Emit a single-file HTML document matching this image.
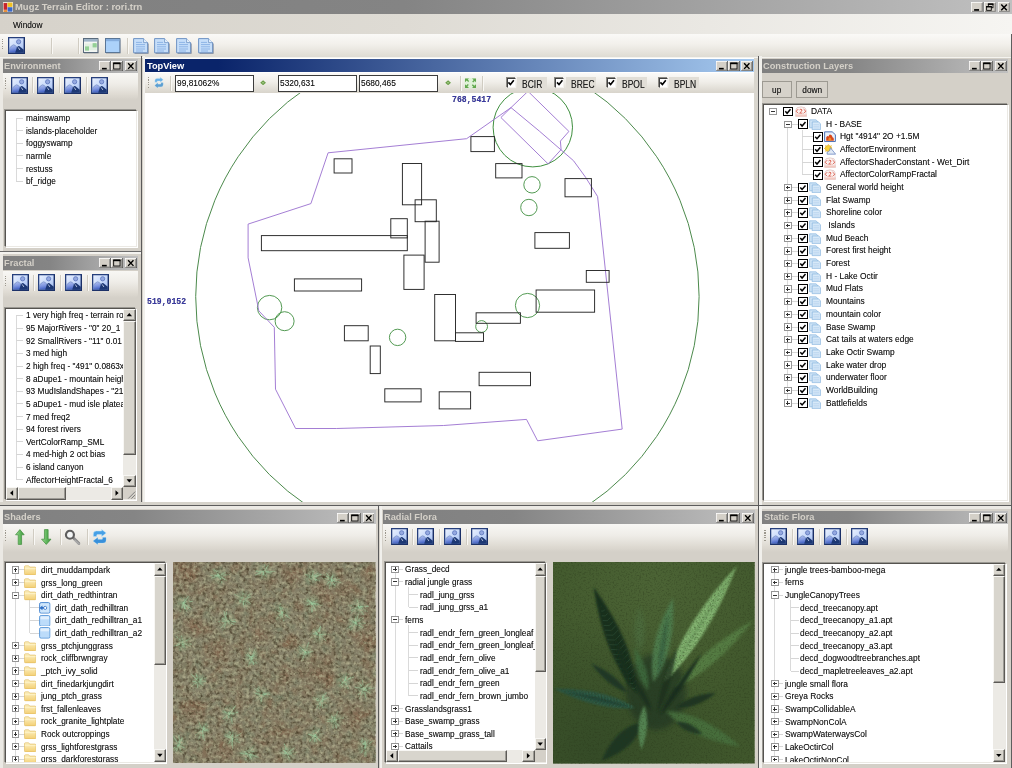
<!DOCTYPE html>
<html><head><meta charset="utf-8"><title>Mugz Terrain Editor : rori.trn</title>
<style>
html,body{margin:0;padding:0}
body{width:1012px;height:768px;overflow:hidden;background:#d4d0c8;position:relative;font-family:"Liberation Sans",sans-serif;}
#r{position:absolute;left:0;top:0;width:1012px;height:768px;overflow:hidden}
#r div,#r svg,#r span{position:absolute}
.t{font-size:9.5px;line-height:12px;height:12px;white-space:nowrap;color:#161616;transform:scaleX(0.872);transform-origin:0 50%;text-shadow:0 0 0.5px rgba(0,0,0,0.45)}
.w{transform:scaleX(0.884)}
.b{font-weight:bold;font-size:9.6px;transform:scaleX(0.965);text-shadow:none}
.mono{font-family:"Liberation Mono","DejaVu Sans Mono",monospace;font-weight:bold;font-size:8.4px;color:#3838a2;transform:scaleX(0.97)}
</style></head>
<body><div id="r">

<svg width="0" height="0" style="left:0;top:0">
<defs>
<linearGradient id="picg" x1="0" y1="0" x2="1" y2="1"><stop offset="0" stop-color="#eaf1fe"/><stop offset="0.55" stop-color="#c6d8fa"/><stop offset="1" stop-color="#9ab6ee"/></linearGradient>
<linearGradient id="mtn" x1="0" y1="0" x2="0.25" y2="1"><stop offset="0" stop-color="#b6c4f0"/><stop offset="0.55" stop-color="#7e96e0"/><stop offset="1" stop-color="#3f5ec0"/></linearGradient>
<symbol id="pic" viewBox="0 0 16 16">
 <rect x="-0.700" y="-0.700" width="17.400" height="17.400" rx="1" fill="#f6f8fd" opacity="0.850"/>
 <rect x="0.600" y="0.600" width="14.800" height="14.800" fill="url(#picg)" stroke="#263f7c" stroke-width="1.200"/>
 <circle cx="10" cy="4.500" r="2" fill="#95a9e0" stroke="#5e78be" stroke-width="0.800"/>
 <path d="M1.200 14.800V10.800Q3 8 5.200 7.300Q7 7.500 8.400 9.600L12.400 14.800Z" fill="url(#mtn)" stroke="#5f7cb6" stroke-width="0.500"/>
 <path d="M6.800 14.800L8.300 9.900Q9.700 8.100 10.800 8.700L14.800 12V14.800Z" fill="#1d3874"/>
 <path d="M9.600 9.800L11.200 12.200" stroke="#e6eeff" stroke-width="0.900" opacity="0.800"/>
 <path d="M0.600 15.400H15.400V0.600" fill="none" stroke="#15295c" stroke-width="1.200" opacity="0.700"/>
</symbol>
<symbol id="appico" viewBox="0 0 10 10">
 <rect x="0" y="0" width="10" height="10" fill="#e8e4dc"/>
 <rect x="0.6" y="1" width="3.6" height="6.4" fill="#c8242c"/>
 <rect x="4.6" y="0.6" width="4.8" height="4" fill="#f0c020"/>
 <rect x="4.6" y="5" width="4.8" height="4.2" fill="#3a68c8"/>
 <rect x="0.6" y="7.8" width="3.6" height="1.6" fill="#e88020"/>
</symbol>
<symbol id="b_base" viewBox="0 0 16 14">
 <rect x="0" y="0" width="16" height="14" fill="#d4d0c8"/>
 <path d="M0 14V0H16" fill="none" stroke="#fff" stroke-width="1.8"/>
 <path d="M16 0V14H0" fill="none" stroke="#404040" stroke-width="1.8"/>
 <path d="M14.4 1.4V12.4H1.4" fill="none" stroke="#808080" stroke-width="1.2"/>
</symbol>
<symbol id="b_min" viewBox="0 0 16 14"><use href="#b_base"/><rect x="4" y="9.4" width="6.4" height="2.2" fill="#000"/></symbol>
<symbol id="b_max" viewBox="0 0 16 14"><use href="#b_base"/><rect x="3.6" y="2.8" width="8.6" height="8.2" fill="none" stroke="#000" stroke-width="1.2"/><rect x="3" y="2.2" width="9.8" height="2.2" fill="#000"/></symbol>
<symbol id="b_restore" viewBox="0 0 16 14"><use href="#b_base"/><rect x="5.6" y="2.6" width="6" height="5" fill="none" stroke="#000" stroke-width="1.1"/><rect x="5" y="2" width="7.2" height="1.8" fill="#000"/><rect x="3.4" y="6" width="6" height="5" fill="#d4d0c8" stroke="#000" stroke-width="1.1"/><rect x="2.8" y="5.4" width="7.2" height="1.8" fill="#000"/></symbol>
<symbol id="b_close" viewBox="0 0 16 14"><use href="#b_base"/><path d="M4.2 3.2L11.4 10.8M11.4 3.2L4.2 10.8" stroke="#000" stroke-width="1.9"/></symbol>
<symbol id="win_green" viewBox="0 0 16 16">
 <rect x="1" y="1.4" width="14.6" height="14.2" fill="#6a6f78" opacity="0.55"/>
 <rect x="0.5" y="0.5" width="14.4" height="14" fill="#f3f6f3" stroke="#596a7c" stroke-width="1"/>
 <rect x="1" y="1" width="13.4" height="2.6" fill="#9eb4c8"/>
 <rect x="2" y="8.4" width="4" height="4" fill="#58b85c"/><rect x="9.6" y="5.4" width="4" height="4" fill="#58b85c"/>
 <rect x="2" y="5.6" width="11.6" height="6.6" fill="#cfe8cf" opacity="0.5"/>
</symbol>
<symbol id="win_blue" viewBox="0 0 16 16">
 <rect x="1" y="1.4" width="14.6" height="14.2" fill="#6a6f78" opacity="0.55"/>
 <rect x="0.5" y="0.5" width="14.4" height="14" fill="#acd2fa" stroke="#5a7696" stroke-width="1"/>
 <rect x="1" y="1" width="13.4" height="2.2" fill="#86aede"/>
</symbol>
<symbol id="doc" viewBox="0 0 16 16">
 <path d="M1.600 1.800H11.400L15.600 5.800V15.800H1.600Z" fill="#56627a" opacity="0.750"/>
 <path d="M0.600 0.600H10.600L14.600 4.600V14.800H0.600Z" fill="#c6def9" stroke="#6f93c4" stroke-width="1"/>
 <path d="M10.600 0.600V4.600H14.600" fill="#e8f2fd" stroke="#6f93c4" stroke-width="0.800"/>
 <path d="M3 4.400H9M3 6.600H12M3 8.800H12M3 11H12M3 13H10" stroke="#8db4e6" stroke-width="1"/>
</symbol>
<symbol id="refresh" viewBox="0 0 16 16">
 <g opacity="0.800"><use href="#rfa"/><use href="#rfa" transform="rotate(180 8 8)"/>
 <path d="M1.4 7.6V5Q1.4 2 4.600 2H10V0.400L14.800 4L10 7.600V5.600H5.600Q4.900 5.600 4.900 6.300V7.600Z" fill="#2a7ab8" opacity="0.500" transform="rotate(180 8 8)"/></g>
</symbol>
<symbol id="refresh2" viewBox="0 0 16 16">
 <path id="rfa" d="M1.4 7.6V5Q1.4 2 4.600 2H10V0.400L14.800 4L10 7.600V5.600H5.600Q4.900 5.600 4.900 6.300V7.600Z" fill="#46a0e6" stroke="#bfe6f8" stroke-width="0.500"/>
 <use href="#rfa" transform="rotate(180 8 8)"/>
 <path d="M1.4 7.6V5Q1.4 2 4.600 2H10V0.400L14.800 4L10 7.600V5.600H5.600Q4.900 5.600 4.900 6.300V7.600Z" fill="#2d84d2" opacity="0.550" transform="rotate(180 8 8)"/>
</symbol>
<symbol id="gdot" viewBox="0 0 6 6"><path d="M0.200 3L3 0.400L5.800 3L3 5.600Z" fill="#6a9e48"/><path d="M2 3H4" stroke="#b9d8a0" stroke-width="0.900"/></symbol>
<symbol id="arrows4" viewBox="0 0 13 12">
 <rect x="0.500" y="0.500" width="12" height="11" rx="2" fill="#dcf2d4" opacity="0.800"/><g fill="#62a84e"><path d="M1 1h4l-1.3 1.3 1.5 1.5-1 1-1.5-1.5L1 5z"/><path d="M12 1v4l-1.3-1.3-1.5 1.5-1-1 1.5-1.5L8 1z"/>
 <path d="M1 11V7l1.300 1.300 1.500-1.500 1 1-1.500 1.500L5 11z"/><path d="M12 11H8l1.300-1.300-1.500-1.500 1-1 1.500 1.500L12 7z"/></g>
</symbol>
<linearGradient id="ggreen" x1="0" y1="0" x2="1" y2="0"><stop offset="0" stop-color="#a4dc98"/><stop offset="0.5" stop-color="#62b85e"/><stop offset="1" stop-color="#3f9640"/></linearGradient>
<symbol id="arr_up" viewBox="0 0 11 16"><path d="M5.500 0.600L10.400 5.800H7.400V15.400H3.600V5.800H0.600Z" fill="url(#ggreen)" stroke="#3c8a38" stroke-width="0.7"/></symbol>
<symbol id="arr_dn" viewBox="0 0 11 16"><path d="M5.500 15.400L10.400 10.200H7.400V0.600H3.600V10.200H0.600Z" fill="url(#ggreen)" stroke="#3c8a38" stroke-width="0.7"/></symbol>
<symbol id="mag" viewBox="0 0 16 16">
 <path d="M9 8.600L14.600 14.200" stroke="#8a8a8a" stroke-width="2.800" stroke-linecap="round"/>
 <path d="M10.200 10.600L15.200 15" stroke="#b8b8b8" stroke-width="1.400" opacity="0.700"/>
 <circle cx="5.800" cy="5.600" r="3.900" fill="#f4f6f6" stroke="#5e5e5e" stroke-width="2.100"/>
</symbol>
<linearGradient id="gfold" x1="0" y1="0" x2="0" y2="1"><stop offset="0" stop-color="#fdf2c4"/><stop offset="1" stop-color="#f3cf74"/></linearGradient>
<symbol id="folder" viewBox="0 0 16 13">
 <path d="M0.600 2.400Q0.600 1 2 1H6L7.400 2.600H14Q15.400 2.600 15.400 4V11Q15.400 12.400 14 12.400H2Q0.600 12.400 0.600 11Z" fill="url(#gfold)" stroke="#dfb95c" stroke-width="0.800"/>
 <path d="M1 4.600H15" stroke="#fff6d0" stroke-width="1"/>
</symbol>
<symbol id="shfile" viewBox="0 0 12 12">
 <rect x="0.600" y="0.600" width="10.800" height="10.800" rx="1.600" fill="#bcdcfa" stroke="#5a98d8" stroke-width="1"/>
 <rect x="1.600" y="1.400" width="8.800" height="3" fill="#e2f0fd"/>
</symbol>
<symbol id="shfile1" viewBox="0 0 12 12">
 <rect x="0.600" y="0.600" width="10.800" height="10.800" rx="1.600" fill="#cfe6fb" stroke="#4a88d0" stroke-width="1"/>
 <path d="M0.400 6L3.600 3.600V8.400ZM3 5.200H7.600V6.800H3Z" fill="#2f6fc4"/>
 <circle cx="6.400" cy="6" r="1.600" fill="#fff" stroke="#2f6fc4" stroke-width="0.800"/>
</symbol>
<symbol id="i_red" viewBox="0 0 12 11.400">
 <path d="M2 1.600Q6 -0.400 10 1.600Q12 4 11 7L11.600 10.600H0.600L1 7Q0 4 2 1.600Z" fill="#fbf3f1" stroke="#d8b4b0" stroke-width="0.600"/>
 <rect x="0.800" y="8.600" width="10.600" height="2.200" fill="#f2c8c0"/>
 <path d="M3.200 3L1.200 5.200L3.200 7.400" fill="none" stroke="#d8503f" stroke-width="0.85"/>
 <path d="M4.600 3.800Q6 2.200 7 3.800Q7.200 5 4.600 7.200H7.400" fill="none" stroke="#d8503f" stroke-width="0.85"/>
 <path d="M8.600 3L10.800 5.200L8.600 7.400" fill="none" stroke="#d8503f" stroke-width="0.85"/>
</symbol>
<symbol id="i_layer" viewBox="0 0 12 11.400">
 <path d="M0.600 0.600H7L9 2.600V9H0.600Z" fill="#cfe4f6" stroke="#8db8e0" stroke-width="0.800"/>
 <path d="M3.200 2.800H9.600L11.400 4.600V11H3.200Z" fill="#d6e8f8" stroke="#8db8e0" stroke-width="0.800"/>
 <path d="M4.400 5.600H10M4.400 7.400H10M4.400 9.200H10" stroke="#b4d2ee" stroke-width="0.700"/>
</symbol>
<symbol id="i_hgt" viewBox="0 0 12 11.400">
 <path d="M0.600 0.600H8.200L11.400 3.600V10.800H0.600Z" fill="#e9f0fb" stroke="#4a6fb4" stroke-width="1"/>
 <path d="M2.200 10V6.600Q3 4 4.600 5.400Q5.200 2.400 6.800 3.600Q8.600 4.600 8.400 6.200Q10.200 6.400 9.800 10Z" fill="#d8481c"/>
 <path d="M4.200 10Q4 7.400 5.800 6.400Q7.600 7.400 7.400 10Z" fill="#f08a28"/>
</symbol>
<symbol id="i_env" viewBox="0 0 12 11.400">
 <circle cx="4.400" cy="4.400" r="3.200" fill="#f8d23c" stroke="#e8b020" stroke-width="0.800"/>
 <path d="M4.400 0V1M0 4.400H1M1.200 1.200L2 2M7.600 1.200L6.800 2M1.200 7.600L2 6.800" stroke="#e8b020" stroke-width="0.800"/>
 <path d="M6.400 3.600L11.600 10.400H3.200Q2.400 8 4.400 7.600Q6 7.600 6.400 3.600Z" fill="#dfe8f4" stroke="#6a86c0" stroke-width="0.800"/>
</symbol>
<radialGradient id="gred"><stop offset="0" stop-color="#82573f" stop-opacity="0.42"/><stop offset="0.6" stop-color="#82573f" stop-opacity="0.18"/><stop offset="1" stop-color="#82573f" stop-opacity="0"/></radialGradient>
<radialGradient id="ggrn"><stop offset="0" stop-color="#8db489" stop-opacity="0.8"/><stop offset="0.45" stop-color="#88a882" stop-opacity="0.4"/><stop offset="1" stop-color="#789c70" stop-opacity="0"/></radialGradient>
<radialGradient id="gfbg" cx="0.5" cy="0.1" r="0.7"><stop offset="0" stop-color="#4d6536" stop-opacity="0.9"/><stop offset="1" stop-color="#4d6536" stop-opacity="0"/></radialGradient>
<radialGradient id="gfbg2" cx="0.2" cy="0.95" r="0.7"><stop offset="0" stop-color="#324826" stop-opacity="0.8"/><stop offset="1" stop-color="#324826" stop-opacity="0"/></radialGradient>
<filter id="noiseA" color-interpolation-filters="sRGB" x="0" y="0" width="100%" height="100%"><feTurbulence type="fractalNoise" baseFrequency="0.08" numOctaves="2" seed="8"/><feColorMatrix type="matrix" values="0 0 0 0 0.50  0 0 0 0 0.39  0 0 0 0 0.29  1.3 -1.3 0 0 0.16"/></filter>
<filter id="noiseA2" color-interpolation-filters="sRGB" x="0" y="0" width="100%" height="100%"><feTurbulence type="fractalNoise" baseFrequency="0.1" numOctaves="2" seed="21"/><feColorMatrix type="matrix" values="0 0 0 0 0.47  0 0 0 0 0.50  0 0 0 0 0.40  0 1.3 -1.3 0 0.12"/></filter>
<filter id="noiseB" color-interpolation-filters="sRGB" x="0" y="0" width="100%" height="100%"><feTurbulence type="fractalNoise" baseFrequency="0.3" numOctaves="2" seed="3"/><feColorMatrix type="matrix" values="0 0 0 0 0.27  0 0 0 0 0.23  0 0 0 0 0.15  -2.2 0 0 0 1.16"/></filter>
<filter id="noiseB2" color-interpolation-filters="sRGB" x="0" y="0" width="100%" height="100%"><feTurbulence type="fractalNoise" baseFrequency="0.3" numOctaves="2" seed="14"/><feColorMatrix type="matrix" values="0 0 0 0 0.70  0 0 0 0 0.69  0 0 0 0 0.56  0 2.2 0 0 -1.0"/></filter>
<filter id="noiseC" color-interpolation-filters="sRGB" x="0" y="0" width="100%" height="100%"><feTurbulence type="fractalNoise" baseFrequency="0.6" numOctaves="2" seed="5"/><feColorMatrix type="matrix" values="0 0 0 0 0.15  0 0 0 0 0.2  0 0 0 0 0.09  -1.0 0 0 0 0.53"/></filter>
<filter id="b1" x="-20%" y="-20%" width="140%" height="140%"><feGaussianBlur stdDeviation="0.8"/></filter>
<filter id="b2" x="-20%" y="-20%" width="140%" height="140%"><feGaussianBlur stdDeviation="1.4"/></filter>
<filter id="b3" x="-20%" y="-20%" width="140%" height="140%"><feGaussianBlur stdDeviation="2.4"/></filter>
</defs>
</svg>
<div style="left:0.0px;top:0.0px;width:1012.0px;height:14.0px;background:linear-gradient(90deg,#808080 0%,#848484 40%,#c0c0c0 100%)"></div>
<svg style="left:2.5px;top:1.5px" width="10" height="10.5" viewBox="0 0 16 16" preserveAspectRatio="none"><use href="#appico"/></svg>
<span class="t b" style="left:14.8px;top:1.4px;color:#d4d0c8;transform:scaleX(0.985)">Mugz Terrain Editor : rori.trn</span>
<svg style="left:971.2px;top:1.7px" width="12.4" height="10.6" viewBox="0 0 16 14" preserveAspectRatio="none"><use href="#b_min"/></svg><svg style="left:983.8px;top:1.7px" width="12.4" height="10.6" viewBox="0 0 16 14" preserveAspectRatio="none"><use href="#b_restore"/></svg><svg style="left:997.9px;top:1.7px" width="12.4" height="10.6" viewBox="0 0 16 14" preserveAspectRatio="none"><use href="#b_close"/></svg>
<div style="left:0.0px;top:14.0px;width:1012.0px;height:20.0px;background:linear-gradient(90deg,#d6d2ca 0%,#dedbd4 40%,#f6f5f2 100%)"></div>
<span class="t " style="left:12.6px;top:18.6px;">Window</span>
<div style="left:0.0px;top:34.0px;width:1012.0px;height:22.5px;background:linear-gradient(180deg,#faf9f7 0%,#f2f0eb 45%,#dedbd3 100%)"></div>
<div style="left:2.2px;top:38.5px;width:1.2px;height:1.2px;background:#9c988e"></div><div style="left:2.2px;top:40.9px;width:1.2px;height:1.2px;background:#9c988e"></div><div style="left:2.2px;top:43.3px;width:1.2px;height:1.2px;background:#9c988e"></div><div style="left:2.2px;top:45.7px;width:1.2px;height:1.2px;background:#9c988e"></div><div style="left:2.2px;top:48.1px;width:1.2px;height:1.2px;background:#9c988e"></div>
<svg style="left:8.0px;top:37.0px" width="17" height="17" viewBox="0 0 16 16" preserveAspectRatio="none"><use href="#pic"/></svg>
<div style="left:51.0px;top:38.0px;width:1.0px;height:16.0px;background:#d0ccc2"></div><div style="left:52.0px;top:38.0px;width:1.0px;height:16.0px;background:#f9f8f5"></div>
<div style="left:77.5px;top:38.0px;width:1.0px;height:16.0px;background:#d0ccc2"></div><div style="left:78.5px;top:38.0px;width:1.0px;height:16.0px;background:#f9f8f5"></div>
<svg style="left:83.0px;top:37.5px" width="16" height="16" viewBox="0 0 16 16" preserveAspectRatio="none"><use href="#win_green"/></svg>
<svg style="left:105.0px;top:37.5px" width="16" height="16" viewBox="0 0 16 16" preserveAspectRatio="none"><use href="#win_blue"/></svg>
<div style="left:126.5px;top:38.0px;width:1.0px;height:16.0px;background:#d0ccc2"></div><div style="left:127.5px;top:38.0px;width:1.0px;height:16.0px;background:#f9f8f5"></div>
<svg style="left:132.5px;top:37.5px" width="16" height="16" viewBox="0 0 16 16" preserveAspectRatio="none"><use href="#doc"/></svg>
<svg style="left:154.0px;top:37.5px" width="16" height="16" viewBox="0 0 16 16" preserveAspectRatio="none"><use href="#doc"/></svg>
<svg style="left:176.0px;top:37.5px" width="16" height="16" viewBox="0 0 16 16" preserveAspectRatio="none"><use href="#doc"/></svg>
<svg style="left:198.0px;top:37.5px" width="16" height="16" viewBox="0 0 16 16" preserveAspectRatio="none"><use href="#doc"/></svg>
<div style="left:0.0px;top:56.5px;width:1012.0px;height:1.2px;background:#f4f3ef"></div>
<div style="left:0.0px;top:57.5px;width:2.6px;height:711.0px;background:#ebe9e4"></div>
<div style="left:141.3px;top:56.0px;width:1.2px;height:449.0px;background:#5a5a5a"></div>
<div style="left:142.5px;top:56.0px;width:2.9px;height:449.0px;background:#f1f0ec"></div>
<div style="left:0.0px;top:251.2px;width:141.3px;height:1.2px;background:#6a6a6a"></div>
<div style="left:0.0px;top:252.4px;width:141.3px;height:1.6px;background:#f4f3ef"></div>
<div style="left:0.0px;top:502.0px;width:1012.0px;height:2.6px;background:#d6d3cb"></div>
<div style="left:0.0px;top:504.5px;width:1012.0px;height:1.3px;background:#5c5c5c"></div>
<div style="left:0.0px;top:505.8px;width:1012.0px;height:3.6px;background:#ebe9e4"></div>
<div style="left:1010.5px;top:34.0px;width:1.5px;height:734.0px;background:#5e5e5e"></div>
<div style="left:3.0px;top:59.0px;width:135.0px;height:13.6px;background:linear-gradient(90deg,#808080 0%,#858585 35%,#c0c0c0 100%)"></div><span class="t b" style="left:4.3px;top:59.8px;color:#d4d0c8">Environment</span><svg style="left:99.3px;top:61.1px" width="11.9" height="10.2" viewBox="0 0 16 14" preserveAspectRatio="none"><use href="#b_min"/></svg><svg style="left:111.4px;top:61.1px" width="11.9" height="10.2" viewBox="0 0 16 14" preserveAspectRatio="none"><use href="#b_max"/></svg><svg style="left:125.0px;top:61.1px" width="11.9" height="10.2" viewBox="0 0 16 14" preserveAspectRatio="none"><use href="#b_close"/></svg>
<div style="left:3.0px;top:73.2px;width:135.0px;height:27.0px;background:linear-gradient(180deg,#f8f7f4 0%,#efede8 40%,#dedad2 80%,#d4d0c8 100%);border-radius:0 0 4px 0"></div>
<div style="left:5.0px;top:78.0px;width:1.2px;height:1.2px;background:#9c988e"></div><div style="left:5.0px;top:80.4px;width:1.2px;height:1.2px;background:#9c988e"></div><div style="left:5.0px;top:82.8px;width:1.2px;height:1.2px;background:#9c988e"></div><div style="left:5.0px;top:85.2px;width:1.2px;height:1.2px;background:#9c988e"></div><div style="left:5.0px;top:87.6px;width:1.2px;height:1.2px;background:#9c988e"></div>
<svg style="left:10.8px;top:76.8px" width="17" height="17" viewBox="0 0 16 16" preserveAspectRatio="none"><use href="#pic"/></svg>
<svg style="left:37.4px;top:76.8px" width="17" height="17" viewBox="0 0 16 16" preserveAspectRatio="none"><use href="#pic"/></svg>
<svg style="left:64.2px;top:76.8px" width="17" height="17" viewBox="0 0 16 16" preserveAspectRatio="none"><use href="#pic"/></svg>
<svg style="left:91.2px;top:76.8px" width="17" height="17" viewBox="0 0 16 16" preserveAspectRatio="none"><use href="#pic"/></svg>
<div style="left:32.3px;top:77.0px;width:1.0px;height:16.0px;background:#d0ccc2"></div><div style="left:33.3px;top:77.0px;width:1.0px;height:16.0px;background:#f9f8f5"></div>
<div style="left:59.2px;top:77.0px;width:1.0px;height:16.0px;background:#d0ccc2"></div><div style="left:60.2px;top:77.0px;width:1.0px;height:16.0px;background:#f9f8f5"></div>
<div style="left:86.0px;top:77.0px;width:1.0px;height:16.0px;background:#d0ccc2"></div><div style="left:87.0px;top:77.0px;width:1.0px;height:16.0px;background:#f9f8f5"></div>
<div style="left:5.0px;top:110.2px;width:132.0px;height:137.0px;background:#fff;box-sizing:border-box;border:1px solid;border-color:#55534f #ebe9e4 #ebe9e4 #55534f;box-shadow:-1px -1px 0 #9a9892, 1px 1px 0 #fff"></div>
<div style="left:15.5px;top:118.0px;width:1.0px;height:63.2px;background:#dadada"></div>
<div style="left:16.0px;top:117.5px;width:7.0px;height:1.0px;background:#d6d6d6"></div>
<span class="t " style="left:25.6px;top:112.0px;">mainswamp</span>
<div style="left:16.0px;top:130.1px;width:7.0px;height:1.0px;background:#d6d6d6"></div>
<span class="t " style="left:25.6px;top:124.6px;">islands-placeholder</span>
<div style="left:16.0px;top:142.8px;width:7.0px;height:1.0px;background:#d6d6d6"></div>
<span class="t " style="left:25.6px;top:137.3px;">foggyswamp</span>
<div style="left:16.0px;top:155.4px;width:7.0px;height:1.0px;background:#d6d6d6"></div>
<span class="t " style="left:25.6px;top:149.9px;">narmle</span>
<div style="left:16.0px;top:168.1px;width:7.0px;height:1.0px;background:#d6d6d6"></div>
<span class="t " style="left:25.6px;top:162.6px;">restuss</span>
<div style="left:16.0px;top:180.7px;width:7.0px;height:1.0px;background:#d6d6d6"></div>
<span class="t " style="left:25.6px;top:175.2px;">bf_ridge</span>
<div style="left:3.0px;top:255.6px;width:135.0px;height:14.0px;background:linear-gradient(90deg,#808080 0%,#858585 35%,#c0c0c0 100%)"></div><span class="t b" style="left:4.3px;top:256.6px;color:#d4d0c8">Fractal</span><svg style="left:99.3px;top:257.7px" width="11.9" height="10.2" viewBox="0 0 16 14" preserveAspectRatio="none"><use href="#b_min"/></svg><svg style="left:111.4px;top:257.7px" width="11.9" height="10.2" viewBox="0 0 16 14" preserveAspectRatio="none"><use href="#b_max"/></svg><svg style="left:125.0px;top:257.7px" width="11.9" height="10.2" viewBox="0 0 16 14" preserveAspectRatio="none"><use href="#b_close"/></svg>
<div style="left:3.0px;top:270.6px;width:135.0px;height:27.0px;background:linear-gradient(180deg,#f8f7f4 0%,#efede8 40%,#dedad2 80%,#d4d0c8 100%);border-radius:0 0 4px 0"></div>
<div style="left:5.0px;top:275.5px;width:1.2px;height:1.2px;background:#9c988e"></div><div style="left:5.0px;top:277.9px;width:1.2px;height:1.2px;background:#9c988e"></div><div style="left:5.0px;top:280.3px;width:1.2px;height:1.2px;background:#9c988e"></div><div style="left:5.0px;top:282.7px;width:1.2px;height:1.2px;background:#9c988e"></div><div style="left:5.0px;top:285.1px;width:1.2px;height:1.2px;background:#9c988e"></div>
<svg style="left:11.6px;top:274.3px" width="17" height="17" viewBox="0 0 16 16" preserveAspectRatio="none"><use href="#pic"/></svg>
<svg style="left:38.0px;top:274.3px" width="17" height="17" viewBox="0 0 16 16" preserveAspectRatio="none"><use href="#pic"/></svg>
<svg style="left:64.8px;top:274.3px" width="17" height="17" viewBox="0 0 16 16" preserveAspectRatio="none"><use href="#pic"/></svg>
<svg style="left:91.8px;top:274.3px" width="17" height="17" viewBox="0 0 16 16" preserveAspectRatio="none"><use href="#pic"/></svg>
<div style="left:33.0px;top:274.5px;width:1.0px;height:16.0px;background:#d0ccc2"></div><div style="left:34.0px;top:274.5px;width:1.0px;height:16.0px;background:#f9f8f5"></div>
<div style="left:60.0px;top:274.5px;width:1.0px;height:16.0px;background:#d0ccc2"></div><div style="left:61.0px;top:274.5px;width:1.0px;height:16.0px;background:#f9f8f5"></div>
<div style="left:86.8px;top:274.5px;width:1.0px;height:16.0px;background:#d0ccc2"></div><div style="left:87.8px;top:274.5px;width:1.0px;height:16.0px;background:#f9f8f5"></div>
<div style="left:5.0px;top:308.0px;width:131.0px;height:192.0px;background:#fff;box-sizing:border-box;border:1px solid;border-color:#55534f #ebe9e4 #ebe9e4 #55534f;box-shadow:-1px -1px 0 #9a9892, 1px 1px 0 #fff"></div>
<div style="left:6px;top:309px;width:117.3px;height:178px;overflow:hidden">
<div style="left:9.5px;top:6.4px;width:1.0px;height:164.3px;background:#dadada"></div>
<div style="left:10.0px;top:5.9px;width:7.0px;height:1.0px;background:#d6d6d6"></div>
<span class="t " style="left:19.6px;top:0.4px;">1 very high freq - terrain rough</span>
<div style="left:10.0px;top:18.5px;width:7.0px;height:1.0px;background:#d6d6d6"></div>
<span class="t " style="left:19.6px;top:13.0px;">95 MajorRivers - "0" 20_1</span>
<div style="left:10.0px;top:31.2px;width:7.0px;height:1.0px;background:#d6d6d6"></div>
<span class="t " style="left:19.6px;top:25.7px;">92 SmallRivers - "11" 0.01</span>
<div style="left:10.0px;top:43.8px;width:7.0px;height:1.0px;background:#d6d6d6"></div>
<span class="t " style="left:19.6px;top:38.3px;">3 med high</span>
<div style="left:10.0px;top:56.5px;width:7.0px;height:1.0px;background:#d6d6d6"></div>
<span class="t " style="left:19.6px;top:51.0px;">2 high freq - "491" 0.0863x</span>
<div style="left:10.0px;top:69.1px;width:7.0px;height:1.0px;background:#d6d6d6"></div>
<span class="t " style="left:19.6px;top:63.6px;">8 aDupe1 - mountain height</span>
<div style="left:10.0px;top:81.7px;width:7.0px;height:1.0px;background:#d6d6d6"></div>
<span class="t " style="left:19.6px;top:76.2px;">93 MudIslandShapes - "21"</span>
<div style="left:10.0px;top:94.4px;width:7.0px;height:1.0px;background:#d6d6d6"></div>
<span class="t " style="left:19.6px;top:88.9px;">5 aDupe1 - mud isle plateau</span>
<div style="left:10.0px;top:107.0px;width:7.0px;height:1.0px;background:#d6d6d6"></div>
<span class="t " style="left:19.6px;top:101.5px;">7 med freq2</span>
<div style="left:10.0px;top:119.7px;width:7.0px;height:1.0px;background:#d6d6d6"></div>
<span class="t " style="left:19.6px;top:114.2px;">94 forest rivers</span>
<div style="left:10.0px;top:132.3px;width:7.0px;height:1.0px;background:#d6d6d6"></div>
<span class="t " style="left:19.6px;top:126.8px;">VertColorRamp_SML</span>
<div style="left:10.0px;top:144.9px;width:7.0px;height:1.0px;background:#d6d6d6"></div>
<span class="t " style="left:19.6px;top:139.4px;">4 med-high 2 oct bias</span>
<div style="left:10.0px;top:157.6px;width:7.0px;height:1.0px;background:#d6d6d6"></div>
<span class="t " style="left:19.6px;top:152.1px;">6 island canyon</span>
<div style="left:10.0px;top:170.2px;width:7.0px;height:1.0px;background:#d6d6d6"></div>
<span class="t " style="left:19.6px;top:164.7px;">AffectorHeightFractal_6</span>
</div>
<div style="left:123.3px;top:309.0px;width:12.6px;height:178.0px;background:#eceae5"></div><div style="left:123.3px;top:309.0px;width:12.6px;height:12.2px;background:#d8d5cd;box-sizing:border-box;border:1px solid;border-color:#f8f7f4 #5c5a56 #5c5a56 #f8f7f4;box-shadow:inset -1px -1px 0 #9c9a94"></div><div style="left:123.3px;top:474.8px;width:12.6px;height:12.2px;background:#d8d5cd;box-sizing:border-box;border:1px solid;border-color:#f8f7f4 #5c5a56 #5c5a56 #f8f7f4;box-shadow:inset -1px -1px 0 #9c9a94"></div><div style="left:123.3px;top:321.0px;width:12.6px;height:134.0px;background:#d8d5cd;box-sizing:border-box;border:1px solid;border-color:#f8f7f4 #5c5a56 #5c5a56 #f8f7f4;box-shadow:inset -1px -1px 0 #9c9a94"></div>
<div style="left:6.0px;top:487.0px;width:117.3px;height:12.6px;background:#eceae5"></div><div style="left:6.0px;top:487.0px;width:12.2px;height:12.6px;background:#d8d5cd;box-sizing:border-box;border:1px solid;border-color:#f8f7f4 #5c5a56 #5c5a56 #f8f7f4;box-shadow:inset -1px -1px 0 #9c9a94"></div><div style="left:111.1px;top:487.0px;width:12.2px;height:12.6px;background:#d8d5cd;box-sizing:border-box;border:1px solid;border-color:#f8f7f4 #5c5a56 #5c5a56 #f8f7f4;box-shadow:inset -1px -1px 0 #9c9a94"></div><div style="left:18.4px;top:487.0px;width:47.6px;height:12.6px;background:#d8d5cd;box-sizing:border-box;border:1px solid;border-color:#f8f7f4 #5c5a56 #5c5a56 #f8f7f4;box-shadow:inset -1px -1px 0 #9c9a94"></div>
<div style="left:123.3px;top:487.0px;width:12.6px;height:12.4px;background:#d4d0c8"></div>
<div style="left:145.4px;top:58.0px;width:612.0px;height:444.0px;background:#fff"></div>
<div style="left:754.4px;top:58.0px;width:3.6px;height:444.0px;background:#d9d6ce"></div>
<div style="left:758.0px;top:56.0px;width:1.2px;height:449.0px;background:#5a5a5a"></div>
<div style="left:759.2px;top:56.0px;width:2.4px;height:449.0px;background:#f1f0ec"></div>
<div style="left:145.4px;top:58.7px;width:609.0px;height:13.8px;background:linear-gradient(90deg,#0a246a 0%,#0a246a 12%,#a6caf0 100%)"></div><span class="t b" style="left:146.7px;top:59.6px;color:#fff">TopView</span><svg style="left:715.7px;top:60.8px" width="11.9" height="10.2" viewBox="0 0 16 14" preserveAspectRatio="none"><use href="#b_min"/></svg><svg style="left:727.8px;top:60.8px" width="11.9" height="10.2" viewBox="0 0 16 14" preserveAspectRatio="none"><use href="#b_max"/></svg><svg style="left:741.4px;top:60.8px" width="11.9" height="10.2" viewBox="0 0 16 14" preserveAspectRatio="none"><use href="#b_close"/></svg>
<div style="left:145.4px;top:72.5px;width:609.0px;height:20.2px;background:linear-gradient(180deg,#fbfaf8 0%,#f0eee9 45%,#d8d4cb 100%)"></div>
<div style="left:148.0px;top:77.0px;width:1.2px;height:1.2px;background:#9c988e"></div><div style="left:148.0px;top:79.4px;width:1.2px;height:1.2px;background:#9c988e"></div><div style="left:148.0px;top:81.8px;width:1.2px;height:1.2px;background:#9c988e"></div><div style="left:148.0px;top:84.2px;width:1.2px;height:1.2px;background:#9c988e"></div><div style="left:148.0px;top:86.6px;width:1.2px;height:1.2px;background:#9c988e"></div>
<svg style="left:154.4px;top:76.8px" width="10" height="11.2" viewBox="0 0 16 16" preserveAspectRatio="none"><use href="#refresh"/></svg>
<div style="left:169.8px;top:75.5px;width:1.0px;height:15.0px;background:#d0ccc2"></div><div style="left:170.8px;top:75.5px;width:1.0px;height:15.0px;background:#f9f8f5"></div>
<div style="left:175.0px;top:75.0px;width:78.6px;height:16.6px;background:#fff;box-sizing:border-box;border:1.2px solid #3c3c3c"></div><span class="t " style="left:177.0px;top:76.6px;font-size:9.6px">99,81062%</span>
<svg style="left:260.4px;top:79.8px" width="6.2" height="5.6" viewBox="0 0 16 16" preserveAspectRatio="none"><use href="#gdot"/></svg>
<div style="left:278.0px;top:75.0px;width:79.4px;height:16.6px;background:#fff;box-sizing:border-box;border:1.2px solid #3c3c3c"></div><span class="t " style="left:280.0px;top:76.6px;font-size:9.6px">5320,631</span>
<div style="left:358.8px;top:75.0px;width:79.0px;height:16.6px;background:#fff;box-sizing:border-box;border:1.2px solid #3c3c3c"></div><span class="t " style="left:360.8px;top:76.6px;font-size:9.6px">5680,465</span>
<svg style="left:444.8px;top:80.2px" width="6.2" height="5.6" viewBox="0 0 16 16" preserveAspectRatio="none"><use href="#gdot"/></svg>
<div style="left:459.6px;top:75.5px;width:1.0px;height:15.0px;background:#d0ccc2"></div><div style="left:460.6px;top:75.5px;width:1.0px;height:15.0px;background:#f9f8f5"></div>
<svg style="left:464.4px;top:76.6px" width="13" height="12.4" viewBox="0 0 16 16" preserveAspectRatio="none"><use href="#arrows4"/></svg>
<div style="left:482.0px;top:75.5px;width:1.0px;height:15.0px;background:#d0ccc2"></div><div style="left:483.0px;top:75.5px;width:1.0px;height:15.0px;background:#f9f8f5"></div>
<div style="left:517.0px;top:77.4px;width:30.0px;height:13.0px;background:#e1ded7"></div>
<div style="left:506.6px;top:78.4px;width:9.2px;height:9.2px;background:#fff;box-sizing:border-box;border:1px solid;border-color:#404040 #f4f2ee #f4f2ee #404040;box-shadow:-1px -1px 0 #8a8882"></div>
<span class="t " style="left:522.2px;top:78.0px;font-size:10.6px;color:#222;transform:scaleX(0.8)">BCIR</span>
<div style="left:565.6px;top:77.4px;width:30.0px;height:13.0px;background:#e1ded7"></div>
<div style="left:555.2px;top:78.4px;width:9.2px;height:9.2px;background:#fff;box-sizing:border-box;border:1px solid;border-color:#404040 #f4f2ee #f4f2ee #404040;box-shadow:-1px -1px 0 #8a8882"></div>
<span class="t " style="left:570.8px;top:78.0px;font-size:10.6px;color:#222;transform:scaleX(0.8)">BREC</span>
<div style="left:617.2px;top:77.4px;width:30.0px;height:13.0px;background:#e1ded7"></div>
<div style="left:606.8px;top:78.4px;width:9.2px;height:9.2px;background:#fff;box-sizing:border-box;border:1px solid;border-color:#404040 #f4f2ee #f4f2ee #404040;box-shadow:-1px -1px 0 #8a8882"></div>
<span class="t " style="left:622.4px;top:78.0px;font-size:10.6px;color:#222;transform:scaleX(0.8)">BPOL</span>
<div style="left:669.0px;top:77.4px;width:30.0px;height:13.0px;background:#e1ded7"></div>
<div style="left:658.6px;top:78.4px;width:9.2px;height:9.2px;background:#fff;box-sizing:border-box;border:1px solid;border-color:#404040 #f4f2ee #f4f2ee #404040;box-shadow:-1px -1px 0 #8a8882"></div>
<span class="t " style="left:674.2px;top:78.0px;font-size:10.6px;color:#222;transform:scaleX(0.8)">BPLN</span>
<svg style="left:145.4px;top:92.7px" width="609" height="409" viewBox="145.4 92.7 609 409"><circle cx="447.8" cy="296.3" r="251.7" fill="none" stroke="#4c8a4c" stroke-width="1"/><circle cx="533.2" cy="126.9" r="39.7" fill="none" stroke="#3f8f3f" stroke-width="1"/><circle cx="532.4" cy="184.5" r="8.2" fill="none" stroke="#3f8f3f" stroke-width="0.9"/><circle cx="529.3" cy="207.2" r="8.2" fill="none" stroke="#3f8f3f" stroke-width="0.9"/><circle cx="270" cy="307.3" r="12.2" fill="none" stroke="#3f8f3f" stroke-width="0.9"/><circle cx="285" cy="320.9" r="9.5" fill="none" stroke="#3f8f3f" stroke-width="0.9"/><circle cx="398" cy="337.1" r="8.2" fill="none" stroke="#3f8f3f" stroke-width="0.9"/><circle cx="527.9" cy="305.2" r="12.1" fill="none" stroke="#3f8f3f" stroke-width="0.9"/><circle cx="482" cy="326.2" r="5.9" fill="none" stroke="#3f8f3f" stroke-width="0.9"/><polygon points="328.5,152.5 467,138.4 511.4,107.3 540,131 563.4,151.3 573.9,160.4 586,177 598,196.2 622.6,428.8 538,440.5 526.9,419.1 444,425.2 336.8,428.2 296,428.2 275.9,388.9 274.7,327 259.2,310.5 258.1,304.8 248.5,257.5 248.5,223.8 311.3,203.3" fill="none" stroke="#9a6fcf" stroke-width="0.9"/><polyline points="501.3,117.2 511.4,107.3 528.4,91 569.3,131.1 560.8,140.8 561.5,149.3 548.5,163.6 501.3,117.2" fill="none" stroke="#9a6fcf" stroke-width="0.9"/><rect x="334.5" y="158.5" width="17.9" height="14.2" fill="none" stroke="#262626" stroke-width="0.95"/><rect x="471.3" y="136.3" width="23.5" height="15.0" fill="none" stroke="#262626" stroke-width="0.95"/><rect x="496.1" y="163.3" width="26.3" height="14.3" fill="none" stroke="#262626" stroke-width="0.95"/><rect x="565.4" y="178.3" width="26.4" height="18.2" fill="none" stroke="#262626" stroke-width="0.95"/><rect x="402.8" y="163.2" width="19.2" height="41.3" fill="none" stroke="#262626" stroke-width="0.95"/><rect x="415.5" y="199.5" width="21.2" height="21.9" fill="none" stroke="#262626" stroke-width="0.95"/><rect x="391.2" y="218.4" width="16.5" height="19.2" fill="none" stroke="#262626" stroke-width="0.95"/><rect x="425.5" y="220.9" width="14.0" height="41.0" fill="none" stroke="#262626" stroke-width="0.95"/><rect x="261.8" y="235.3" width="145.9" height="15.1" fill="none" stroke="#262626" stroke-width="0.95"/><rect x="404.3" y="254.8" width="20.2" height="34.3" fill="none" stroke="#262626" stroke-width="0.95"/><rect x="294.8" y="278.6" width="67.2" height="12.1" fill="none" stroke="#262626" stroke-width="0.95"/><rect x="344.8" y="325.4" width="23.8" height="15.1" fill="none" stroke="#262626" stroke-width="0.95"/><rect x="370.6" y="345.7" width="10.1" height="27.6" fill="none" stroke="#262626" stroke-width="0.95"/><rect x="435.1" y="294.2" width="20.8" height="46.3" fill="none" stroke="#262626" stroke-width="0.95"/><rect x="455.9" y="332.5" width="28.0" height="8.6" fill="none" stroke="#262626" stroke-width="0.95"/><rect x="476.5" y="312.5" width="44.3" height="10.5" fill="none" stroke="#262626" stroke-width="0.95"/><rect x="536.5" y="289.7" width="58.5" height="22.2" fill="none" stroke="#262626" stroke-width="0.95"/><rect x="535.3" y="232.3" width="34.5" height="15.7" fill="none" stroke="#262626" stroke-width="0.95"/><rect x="586.7" y="270.2" width="22.8" height="11.8" fill="none" stroke="#262626" stroke-width="0.95"/><rect x="385.2" y="388.5" width="36.3" height="13.1" fill="none" stroke="#262626" stroke-width="0.95"/><rect x="439.6" y="391.5" width="31.4" height="17.1" fill="none" stroke="#262626" stroke-width="0.95"/><rect x="479.5" y="372" width="51.4" height="13.4" fill="none" stroke="#262626" stroke-width="0.95"/></svg>
<span class="t mono" style="left:452.4px;top:94.0px;">768,5417</span>
<span class="t mono" style="left:147.4px;top:296.0px;">519,0152</span>
<div style="left:762.0px;top:59.0px;width:246.0px;height:13.6px;background:linear-gradient(90deg,#808080 0%,#858585 35%,#c0c0c0 100%)"></div><span class="t b" style="left:763.3px;top:59.8px;color:#d4d0c8">Construction Layers</span><svg style="left:969.3px;top:61.1px" width="11.9" height="10.2" viewBox="0 0 16 14" preserveAspectRatio="none"><use href="#b_min"/></svg><svg style="left:981.4px;top:61.1px" width="11.9" height="10.2" viewBox="0 0 16 14" preserveAspectRatio="none"><use href="#b_max"/></svg><svg style="left:995.0px;top:61.1px" width="11.9" height="10.2" viewBox="0 0 16 14" preserveAspectRatio="none"><use href="#b_close"/></svg>
<div style="left:762.4px;top:80.8px;width:29.4px;height:17.6px;box-sizing:border-box;border:1px solid #9d9a92;background:#d6d2ca"></div><span class="t" style="left:762.4px;top:84.4px;width:29.4px;text-align:center;transform-origin:50% 50%">up</span>
<div style="left:796.0px;top:80.8px;width:32.4px;height:17.6px;box-sizing:border-box;border:1px solid #9d9a92;background:#d6d2ca"></div><span class="t" style="left:796.0px;top:84.4px;width:32.4px;text-align:center;transform-origin:50% 50%">down</span>
<div style="left:762.6px;top:104.2px;width:245.2px;height:396.8px;background:#fff;box-sizing:border-box;border:1px solid;border-color:#55534f #ebe9e4 #ebe9e4 #55534f;box-shadow:-1px -1px 0 #9a9892, 1px 1px 0 #fff"></div>
<div style="left:787.4px;top:124.3px;width:1.0px;height:279.0px;background:#dadada"></div>
<div style="left:801.9px;top:130.0px;width:1.0px;height:45.1px;background:#dadada"></div>
<div style="left:769.3px;top:107.8px;width:7.4px;height:7.4px;box-sizing:border-box;border:1px solid #969696;background:#fff"></div><div style="left:771.1px;top:111.0px;width:3.8px;height:1.0px;background:#333"></div><div style="left:783.1px;top:106.7px;width:9.5px;height:9.5px;box-sizing:border-box;border:1.9px solid #000;background:#fff"></div><svg style="left:794.6px;top:105.9px" width="12" height="11.4" viewBox="0 0 16 16" preserveAspectRatio="none"><use href="#i_red"/></svg><span class="t w" style="left:810.7px;top:104.9px;">DATA</span>
<div style="left:787.9px;top:123.7px;width:10.0px;height:1.0px;background:#d6d6d6"></div><div style="left:784.2px;top:120.5px;width:7.4px;height:7.4px;box-sizing:border-box;border:1px solid #969696;background:#fff"></div><div style="left:786.0px;top:123.7px;width:3.8px;height:1.0px;background:#333"></div><div style="left:798.1px;top:119.4px;width:9.5px;height:9.5px;box-sizing:border-box;border:1.9px solid #000;background:#fff"></div><svg style="left:809.4px;top:118.6px" width="12" height="11.4" viewBox="0 0 16 16" preserveAspectRatio="none"><use href="#i_layer"/></svg><span class="t w" style="left:825.9px;top:117.6px;">H - BASE</span>
<div style="left:802.4px;top:136.4px;width:10.5px;height:1.0px;background:#d6d6d6"></div><div style="left:813.0px;top:132.1px;width:9.5px;height:9.5px;box-sizing:border-box;border:1.9px solid #000;background:#fff"></div><svg style="left:824.2px;top:131.3px" width="12" height="11.4" viewBox="0 0 16 16" preserveAspectRatio="none"><use href="#i_hgt"/></svg><span class="t w" style="left:840.3px;top:130.3px;">Hgt "4914" 2O +1.5M</span>
<div style="left:802.4px;top:149.0px;width:10.5px;height:1.0px;background:#d6d6d6"></div><div style="left:813.0px;top:144.7px;width:9.5px;height:9.5px;box-sizing:border-box;border:1.9px solid #000;background:#fff"></div><svg style="left:824.2px;top:143.9px" width="12" height="11.4" viewBox="0 0 16 16" preserveAspectRatio="none"><use href="#i_env"/></svg><span class="t w" style="left:840.3px;top:142.9px;">AffectorEnvironment</span>
<div style="left:802.4px;top:161.7px;width:10.5px;height:1.0px;background:#d6d6d6"></div><div style="left:813.0px;top:157.4px;width:9.5px;height:9.5px;box-sizing:border-box;border:1.9px solid #000;background:#fff"></div><svg style="left:824.2px;top:156.6px" width="12" height="11.4" viewBox="0 0 16 16" preserveAspectRatio="none"><use href="#i_red"/></svg><span class="t w" style="left:840.3px;top:155.6px;">AffectorShaderConstant - Wet_Dirt</span>
<div style="left:802.4px;top:174.4px;width:10.5px;height:1.0px;background:#d6d6d6"></div><div style="left:813.0px;top:170.1px;width:9.5px;height:9.5px;box-sizing:border-box;border:1.9px solid #000;background:#fff"></div><svg style="left:824.2px;top:169.3px" width="12" height="11.4" viewBox="0 0 16 16" preserveAspectRatio="none"><use href="#i_red"/></svg><span class="t w" style="left:840.3px;top:168.3px;">AffectorColorRampFractal</span>
<div style="left:787.9px;top:187.1px;width:10.0px;height:1.0px;background:#d6d6d6"></div><div style="left:784.2px;top:183.9px;width:7.4px;height:7.4px;box-sizing:border-box;border:1px solid #969696;background:#fff"></div><div style="left:786.0px;top:187.1px;width:3.8px;height:1.0px;background:#333"></div><div style="left:787.4px;top:185.7px;width:1.0px;height:3.8px;background:#333"></div><div style="left:798.1px;top:182.8px;width:9.5px;height:9.5px;box-sizing:border-box;border:1.9px solid #000;background:#fff"></div><svg style="left:809.4px;top:182.0px" width="12" height="11.4" viewBox="0 0 16 16" preserveAspectRatio="none"><use href="#i_layer"/></svg><span class="t w" style="left:825.9px;top:181.0px;">General world height</span>
<div style="left:787.9px;top:199.8px;width:10.0px;height:1.0px;background:#d6d6d6"></div><div style="left:784.2px;top:196.6px;width:7.4px;height:7.4px;box-sizing:border-box;border:1px solid #969696;background:#fff"></div><div style="left:786.0px;top:199.8px;width:3.8px;height:1.0px;background:#333"></div><div style="left:787.4px;top:198.4px;width:1.0px;height:3.8px;background:#333"></div><div style="left:798.1px;top:195.5px;width:9.5px;height:9.5px;box-sizing:border-box;border:1.9px solid #000;background:#fff"></div><svg style="left:809.4px;top:194.7px" width="12" height="11.4" viewBox="0 0 16 16" preserveAspectRatio="none"><use href="#i_layer"/></svg><span class="t w" style="left:825.9px;top:193.7px;">Flat Swamp</span>
<div style="left:787.9px;top:212.4px;width:10.0px;height:1.0px;background:#d6d6d6"></div><div style="left:784.2px;top:209.2px;width:7.4px;height:7.4px;box-sizing:border-box;border:1px solid #969696;background:#fff"></div><div style="left:786.0px;top:212.4px;width:3.8px;height:1.0px;background:#333"></div><div style="left:787.4px;top:211.0px;width:1.0px;height:3.8px;background:#333"></div><div style="left:798.1px;top:208.1px;width:9.5px;height:9.5px;box-sizing:border-box;border:1.9px solid #000;background:#fff"></div><svg style="left:809.4px;top:207.3px" width="12" height="11.4" viewBox="0 0 16 16" preserveAspectRatio="none"><use href="#i_layer"/></svg><span class="t w" style="left:825.9px;top:206.3px;">Shoreline color</span>
<div style="left:787.9px;top:225.1px;width:10.0px;height:1.0px;background:#d6d6d6"></div><div style="left:784.2px;top:221.9px;width:7.4px;height:7.4px;box-sizing:border-box;border:1px solid #969696;background:#fff"></div><div style="left:786.0px;top:225.1px;width:3.8px;height:1.0px;background:#333"></div><div style="left:787.4px;top:223.7px;width:1.0px;height:3.8px;background:#333"></div><div style="left:798.1px;top:220.8px;width:9.5px;height:9.5px;box-sizing:border-box;border:1.9px solid #000;background:#fff"></div><svg style="left:809.4px;top:220.0px" width="12" height="11.4" viewBox="0 0 16 16" preserveAspectRatio="none"><use href="#i_layer"/></svg><span class="t w" style="left:825.9px;top:219.0px;">&nbsp;Islands</span>
<div style="left:787.9px;top:237.8px;width:10.0px;height:1.0px;background:#d6d6d6"></div><div style="left:784.2px;top:234.6px;width:7.4px;height:7.4px;box-sizing:border-box;border:1px solid #969696;background:#fff"></div><div style="left:786.0px;top:237.8px;width:3.8px;height:1.0px;background:#333"></div><div style="left:787.4px;top:236.4px;width:1.0px;height:3.8px;background:#333"></div><div style="left:798.1px;top:233.5px;width:9.5px;height:9.5px;box-sizing:border-box;border:1.9px solid #000;background:#fff"></div><svg style="left:809.4px;top:232.7px" width="12" height="11.4" viewBox="0 0 16 16" preserveAspectRatio="none"><use href="#i_layer"/></svg><span class="t w" style="left:825.9px;top:231.7px;">Mud Beach</span>
<div style="left:787.9px;top:250.5px;width:10.0px;height:1.0px;background:#d6d6d6"></div><div style="left:784.2px;top:247.3px;width:7.4px;height:7.4px;box-sizing:border-box;border:1px solid #969696;background:#fff"></div><div style="left:786.0px;top:250.5px;width:3.8px;height:1.0px;background:#333"></div><div style="left:787.4px;top:249.1px;width:1.0px;height:3.8px;background:#333"></div><div style="left:798.1px;top:246.2px;width:9.5px;height:9.5px;box-sizing:border-box;border:1.9px solid #000;background:#fff"></div><svg style="left:809.4px;top:245.4px" width="12" height="11.4" viewBox="0 0 16 16" preserveAspectRatio="none"><use href="#i_layer"/></svg><span class="t w" style="left:825.9px;top:244.4px;">Forest first height</span>
<div style="left:787.9px;top:263.2px;width:10.0px;height:1.0px;background:#d6d6d6"></div><div style="left:784.2px;top:260.0px;width:7.4px;height:7.4px;box-sizing:border-box;border:1px solid #969696;background:#fff"></div><div style="left:786.0px;top:263.2px;width:3.8px;height:1.0px;background:#333"></div><div style="left:787.4px;top:261.8px;width:1.0px;height:3.8px;background:#333"></div><div style="left:798.1px;top:258.9px;width:9.5px;height:9.5px;box-sizing:border-box;border:1.9px solid #000;background:#fff"></div><svg style="left:809.4px;top:258.1px" width="12" height="11.4" viewBox="0 0 16 16" preserveAspectRatio="none"><use href="#i_layer"/></svg><span class="t w" style="left:825.9px;top:257.1px;">Forest</span>
<div style="left:787.9px;top:275.8px;width:10.0px;height:1.0px;background:#d6d6d6"></div><div style="left:784.2px;top:272.6px;width:7.4px;height:7.4px;box-sizing:border-box;border:1px solid #969696;background:#fff"></div><div style="left:786.0px;top:275.8px;width:3.8px;height:1.0px;background:#333"></div><div style="left:787.4px;top:274.4px;width:1.0px;height:3.8px;background:#333"></div><div style="left:798.1px;top:271.5px;width:9.5px;height:9.5px;box-sizing:border-box;border:1.9px solid #000;background:#fff"></div><svg style="left:809.4px;top:270.7px" width="12" height="11.4" viewBox="0 0 16 16" preserveAspectRatio="none"><use href="#i_layer"/></svg><span class="t w" style="left:825.9px;top:269.7px;">H - Lake Octir</span>
<div style="left:787.9px;top:288.5px;width:10.0px;height:1.0px;background:#d6d6d6"></div><div style="left:784.2px;top:285.3px;width:7.4px;height:7.4px;box-sizing:border-box;border:1px solid #969696;background:#fff"></div><div style="left:786.0px;top:288.5px;width:3.8px;height:1.0px;background:#333"></div><div style="left:787.4px;top:287.1px;width:1.0px;height:3.8px;background:#333"></div><div style="left:798.1px;top:284.2px;width:9.5px;height:9.5px;box-sizing:border-box;border:1.9px solid #000;background:#fff"></div><svg style="left:809.4px;top:283.4px" width="12" height="11.4" viewBox="0 0 16 16" preserveAspectRatio="none"><use href="#i_layer"/></svg><span class="t w" style="left:825.9px;top:282.4px;">Mud Flats</span>
<div style="left:787.9px;top:301.2px;width:10.0px;height:1.0px;background:#d6d6d6"></div><div style="left:784.2px;top:298.0px;width:7.4px;height:7.4px;box-sizing:border-box;border:1px solid #969696;background:#fff"></div><div style="left:786.0px;top:301.2px;width:3.8px;height:1.0px;background:#333"></div><div style="left:787.4px;top:299.8px;width:1.0px;height:3.8px;background:#333"></div><div style="left:798.1px;top:296.9px;width:9.5px;height:9.5px;box-sizing:border-box;border:1.9px solid #000;background:#fff"></div><svg style="left:809.4px;top:296.1px" width="12" height="11.4" viewBox="0 0 16 16" preserveAspectRatio="none"><use href="#i_layer"/></svg><span class="t w" style="left:825.9px;top:295.1px;">Mountains</span>
<div style="left:787.9px;top:313.9px;width:10.0px;height:1.0px;background:#d6d6d6"></div><div style="left:784.2px;top:310.7px;width:7.4px;height:7.4px;box-sizing:border-box;border:1px solid #969696;background:#fff"></div><div style="left:786.0px;top:313.9px;width:3.8px;height:1.0px;background:#333"></div><div style="left:787.4px;top:312.5px;width:1.0px;height:3.8px;background:#333"></div><div style="left:798.1px;top:309.6px;width:9.5px;height:9.5px;box-sizing:border-box;border:1.9px solid #000;background:#fff"></div><svg style="left:809.4px;top:308.8px" width="12" height="11.4" viewBox="0 0 16 16" preserveAspectRatio="none"><use href="#i_layer"/></svg><span class="t w" style="left:825.9px;top:307.8px;">mountain color</span>
<div style="left:787.9px;top:326.6px;width:10.0px;height:1.0px;background:#d6d6d6"></div><div style="left:784.2px;top:323.4px;width:7.4px;height:7.4px;box-sizing:border-box;border:1px solid #969696;background:#fff"></div><div style="left:786.0px;top:326.6px;width:3.8px;height:1.0px;background:#333"></div><div style="left:787.4px;top:325.2px;width:1.0px;height:3.8px;background:#333"></div><div style="left:798.1px;top:322.3px;width:9.5px;height:9.5px;box-sizing:border-box;border:1.9px solid #000;background:#fff"></div><svg style="left:809.4px;top:321.5px" width="12" height="11.4" viewBox="0 0 16 16" preserveAspectRatio="none"><use href="#i_layer"/></svg><span class="t w" style="left:825.9px;top:320.5px;">Base Swamp</span>
<div style="left:787.9px;top:339.2px;width:10.0px;height:1.0px;background:#d6d6d6"></div><div style="left:784.2px;top:336.0px;width:7.4px;height:7.4px;box-sizing:border-box;border:1px solid #969696;background:#fff"></div><div style="left:786.0px;top:339.2px;width:3.8px;height:1.0px;background:#333"></div><div style="left:787.4px;top:337.8px;width:1.0px;height:3.8px;background:#333"></div><div style="left:798.1px;top:334.9px;width:9.5px;height:9.5px;box-sizing:border-box;border:1.9px solid #000;background:#fff"></div><svg style="left:809.4px;top:334.1px" width="12" height="11.4" viewBox="0 0 16 16" preserveAspectRatio="none"><use href="#i_layer"/></svg><span class="t w" style="left:825.9px;top:333.1px;">Cat tails at waters edge</span>
<div style="left:787.9px;top:351.9px;width:10.0px;height:1.0px;background:#d6d6d6"></div><div style="left:784.2px;top:348.7px;width:7.4px;height:7.4px;box-sizing:border-box;border:1px solid #969696;background:#fff"></div><div style="left:786.0px;top:351.9px;width:3.8px;height:1.0px;background:#333"></div><div style="left:787.4px;top:350.5px;width:1.0px;height:3.8px;background:#333"></div><div style="left:798.1px;top:347.6px;width:9.5px;height:9.5px;box-sizing:border-box;border:1.9px solid #000;background:#fff"></div><svg style="left:809.4px;top:346.8px" width="12" height="11.4" viewBox="0 0 16 16" preserveAspectRatio="none"><use href="#i_layer"/></svg><span class="t w" style="left:825.9px;top:345.8px;">Lake Octir Swamp</span>
<div style="left:787.9px;top:364.6px;width:10.0px;height:1.0px;background:#d6d6d6"></div><div style="left:784.2px;top:361.4px;width:7.4px;height:7.4px;box-sizing:border-box;border:1px solid #969696;background:#fff"></div><div style="left:786.0px;top:364.6px;width:3.8px;height:1.0px;background:#333"></div><div style="left:787.4px;top:363.2px;width:1.0px;height:3.8px;background:#333"></div><div style="left:798.1px;top:360.3px;width:9.5px;height:9.5px;box-sizing:border-box;border:1.9px solid #000;background:#fff"></div><svg style="left:809.4px;top:359.5px" width="12" height="11.4" viewBox="0 0 16 16" preserveAspectRatio="none"><use href="#i_layer"/></svg><span class="t w" style="left:825.9px;top:358.5px;">Lake water drop</span>
<div style="left:787.9px;top:377.3px;width:10.0px;height:1.0px;background:#d6d6d6"></div><div style="left:784.2px;top:374.1px;width:7.4px;height:7.4px;box-sizing:border-box;border:1px solid #969696;background:#fff"></div><div style="left:786.0px;top:377.3px;width:3.8px;height:1.0px;background:#333"></div><div style="left:787.4px;top:375.9px;width:1.0px;height:3.8px;background:#333"></div><div style="left:798.1px;top:373.0px;width:9.5px;height:9.5px;box-sizing:border-box;border:1.9px solid #000;background:#fff"></div><svg style="left:809.4px;top:372.2px" width="12" height="11.4" viewBox="0 0 16 16" preserveAspectRatio="none"><use href="#i_layer"/></svg><span class="t w" style="left:825.9px;top:371.2px;">underwater floor</span>
<div style="left:787.9px;top:390.0px;width:10.0px;height:1.0px;background:#d6d6d6"></div><div style="left:784.2px;top:386.8px;width:7.4px;height:7.4px;box-sizing:border-box;border:1px solid #969696;background:#fff"></div><div style="left:786.0px;top:390.0px;width:3.8px;height:1.0px;background:#333"></div><div style="left:787.4px;top:388.6px;width:1.0px;height:3.8px;background:#333"></div><div style="left:798.1px;top:385.7px;width:9.5px;height:9.5px;box-sizing:border-box;border:1.9px solid #000;background:#fff"></div><svg style="left:809.4px;top:384.9px" width="12" height="11.4" viewBox="0 0 16 16" preserveAspectRatio="none"><use href="#i_layer"/></svg><span class="t w" style="left:825.9px;top:383.9px;">WorldBuilding</span>
<div style="left:787.9px;top:402.6px;width:10.0px;height:1.0px;background:#d6d6d6"></div><div style="left:784.2px;top:399.4px;width:7.4px;height:7.4px;box-sizing:border-box;border:1px solid #969696;background:#fff"></div><div style="left:786.0px;top:402.6px;width:3.8px;height:1.0px;background:#333"></div><div style="left:787.4px;top:401.2px;width:1.0px;height:3.8px;background:#333"></div><div style="left:798.1px;top:398.3px;width:9.5px;height:9.5px;box-sizing:border-box;border:1.9px solid #000;background:#fff"></div><svg style="left:809.4px;top:397.5px" width="12" height="11.4" viewBox="0 0 16 16" preserveAspectRatio="none"><use href="#i_layer"/></svg><span class="t w" style="left:825.9px;top:396.5px;">Battlefields</span>
<div style="left:378.3px;top:505.0px;width:1.2px;height:263.0px;background:#5a5a5a"></div>
<div style="left:379.5px;top:505.8px;width:2.4px;height:263.0px;background:#f1f0ec"></div>
<div style="left:758.0px;top:505.0px;width:1.2px;height:263.0px;background:#5a5a5a"></div>
<div style="left:759.2px;top:505.8px;width:2.4px;height:263.0px;background:#f1f0ec"></div>
<div style="left:3.0px;top:510.4px;width:372.6px;height:13.4px;background:linear-gradient(90deg,#808080 0%,#858585 35%,#c0c0c0 100%)"></div><span class="t b" style="left:4.3px;top:511.1px;color:#d4d0c8">Shaders</span><svg style="left:336.9px;top:512.5px" width="11.9" height="10.2" viewBox="0 0 16 14" preserveAspectRatio="none"><use href="#b_min"/></svg><svg style="left:349.0px;top:512.5px" width="11.9" height="10.2" viewBox="0 0 16 14" preserveAspectRatio="none"><use href="#b_max"/></svg><svg style="left:362.6px;top:512.5px" width="11.9" height="10.2" viewBox="0 0 16 14" preserveAspectRatio="none"><use href="#b_close"/></svg>
<div style="left:3.0px;top:524.0px;width:372.6px;height:28.0px;background:linear-gradient(180deg,#f8f7f4 0%,#efede8 40%,#dedad2 80%,#d4d0c8 100%);border-radius:0 0 4px 0"></div>
<div style="left:4.6px;top:530.0px;width:1.2px;height:1.2px;background:#9c988e"></div><div style="left:4.6px;top:532.4px;width:1.2px;height:1.2px;background:#9c988e"></div><div style="left:4.6px;top:534.8px;width:1.2px;height:1.2px;background:#9c988e"></div><div style="left:4.6px;top:537.2px;width:1.2px;height:1.2px;background:#9c988e"></div><div style="left:4.6px;top:539.6px;width:1.2px;height:1.2px;background:#9c988e"></div>
<svg style="left:14.8px;top:528.6px" width="9.8" height="16" viewBox="0 0 11 16" preserveAspectRatio="none"><use href="#arr_up"/></svg>
<div style="left:33.0px;top:529.0px;width:1.0px;height:16.0px;background:#d0ccc2"></div><div style="left:34.0px;top:529.0px;width:1.0px;height:16.0px;background:#f9f8f5"></div>
<svg style="left:41.4px;top:528.6px" width="10.6" height="16" viewBox="0 0 11 16" preserveAspectRatio="none"><use href="#arr_dn"/></svg>
<div style="left:59.6px;top:529.0px;width:1.0px;height:16.0px;background:#d0ccc2"></div><div style="left:60.6px;top:529.0px;width:1.0px;height:16.0px;background:#f9f8f5"></div>
<svg style="left:64.4px;top:528.6px" width="16.4" height="16.4" viewBox="0 0 16 16" preserveAspectRatio="none"><use href="#mag"/></svg>
<div style="left:86.6px;top:529.0px;width:1.0px;height:16.0px;background:#d0ccc2"></div><div style="left:87.6px;top:529.0px;width:1.0px;height:16.0px;background:#f9f8f5"></div>
<svg style="left:92.4px;top:528.6px" width="15.4" height="16" viewBox="0 0 16 16" preserveAspectRatio="none"><use href="#refresh2"/></svg>
<div style="left:5.4px;top:562.4px;width:161.0px;height:200.2px;background:#fff;box-sizing:border-box;border:1px solid;border-color:#55534f #ebe9e4 #ebe9e4 #55534f;box-shadow:-1px -1px 0 #9a9892, 1px 1px 0 #fff"></div>
<div style="left:6.4px;top:563.4px;width:147.6px;height:198.2px;overflow:hidden">
<div style="left:8.7px;top:6.6px;width:1.0px;height:201.9px;background:#dadada"></div>
<div style="left:23.1px;top:36.8px;width:1.0px;height:32.9px;background:#dadada"></div>
<div style="left:9.2px;top:6.1px;width:9.0px;height:1.0px;background:#d6d6d6"></div>
<div style="left:5.6px;top:3.0px;width:7.2px;height:7.2px;box-sizing:border-box;border:1px solid #969696;background:#fff"></div><div style="left:7.4px;top:6.1px;width:3.6px;height:1.0px;background:#333"></div><div style="left:8.7px;top:4.8px;width:1.0px;height:3.6px;background:#333"></div>
<svg style="left:17.6px;top:1.6px" width="12.4" height="10.4" viewBox="0 0 16 13" preserveAspectRatio="none"><use href="#folder"/></svg>
<span class="t " style="left:34.4px;top:0.6px;">dirt_muddampdark</span>
<div style="left:9.2px;top:18.7px;width:9.0px;height:1.0px;background:#d6d6d6"></div>
<div style="left:5.6px;top:15.6px;width:7.2px;height:7.2px;box-sizing:border-box;border:1px solid #969696;background:#fff"></div><div style="left:7.4px;top:18.7px;width:3.6px;height:1.0px;background:#333"></div><div style="left:8.7px;top:17.4px;width:1.0px;height:3.6px;background:#333"></div>
<svg style="left:17.6px;top:14.2px" width="12.4" height="10.4" viewBox="0 0 16 13" preserveAspectRatio="none"><use href="#folder"/></svg>
<span class="t " style="left:34.4px;top:13.2px;">grss_long_green</span>
<div style="left:9.2px;top:31.3px;width:9.0px;height:1.0px;background:#d6d6d6"></div>
<div style="left:5.6px;top:28.2px;width:7.2px;height:7.2px;box-sizing:border-box;border:1px solid #969696;background:#fff"></div><div style="left:7.4px;top:31.3px;width:3.6px;height:1.0px;background:#333"></div>
<svg style="left:17.6px;top:26.8px" width="12.4" height="10.4" viewBox="0 0 16 13" preserveAspectRatio="none"><use href="#folder"/></svg>
<span class="t " style="left:34.4px;top:25.8px;">dirt_dath_redthintran</span>
<div style="left:23.6px;top:44.0px;width:10.0px;height:1.0px;background:#d6d6d6"></div>
<svg style="left:33.0px;top:38.7px" width="11.6" height="11.8" viewBox="0 0 12 12" preserveAspectRatio="none"><use href="#shfile1"/></svg>
<span class="t " style="left:49.0px;top:38.5px;">dirt_dath_redhilltran</span>
<div style="left:23.6px;top:56.6px;width:10.0px;height:1.0px;background:#d6d6d6"></div>
<svg style="left:33.0px;top:51.3px" width="11.6" height="11.8" viewBox="0 0 12 12" preserveAspectRatio="none"><use href="#shfile"/></svg>
<span class="t " style="left:49.0px;top:51.1px;">dirt_dath_redhilltran_a1</span>
<div style="left:23.6px;top:69.2px;width:10.0px;height:1.0px;background:#d6d6d6"></div>
<svg style="left:33.0px;top:63.9px" width="11.6" height="11.8" viewBox="0 0 12 12" preserveAspectRatio="none"><use href="#shfile"/></svg>
<span class="t " style="left:49.0px;top:63.7px;">dirt_dath_redhilltran_a2</span>
<div style="left:9.2px;top:81.8px;width:9.0px;height:1.0px;background:#d6d6d6"></div>
<div style="left:5.6px;top:78.7px;width:7.2px;height:7.2px;box-sizing:border-box;border:1px solid #969696;background:#fff"></div><div style="left:7.4px;top:81.8px;width:3.6px;height:1.0px;background:#333"></div><div style="left:8.7px;top:80.5px;width:1.0px;height:3.6px;background:#333"></div>
<svg style="left:17.6px;top:77.3px" width="12.4" height="10.4" viewBox="0 0 16 13" preserveAspectRatio="none"><use href="#folder"/></svg>
<span class="t " style="left:34.4px;top:76.3px;">grss_ptchjunggrass</span>
<div style="left:9.2px;top:94.4px;width:9.0px;height:1.0px;background:#d6d6d6"></div>
<div style="left:5.6px;top:91.3px;width:7.2px;height:7.2px;box-sizing:border-box;border:1px solid #969696;background:#fff"></div><div style="left:7.4px;top:94.4px;width:3.6px;height:1.0px;background:#333"></div><div style="left:8.7px;top:93.1px;width:1.0px;height:3.6px;background:#333"></div>
<svg style="left:17.6px;top:89.9px" width="12.4" height="10.4" viewBox="0 0 16 13" preserveAspectRatio="none"><use href="#folder"/></svg>
<span class="t " style="left:34.4px;top:88.9px;">rock_cliffbrwngray</span>
<div style="left:9.2px;top:107.1px;width:9.0px;height:1.0px;background:#d6d6d6"></div>
<div style="left:5.6px;top:104.0px;width:7.2px;height:7.2px;box-sizing:border-box;border:1px solid #969696;background:#fff"></div><div style="left:7.4px;top:107.1px;width:3.6px;height:1.0px;background:#333"></div><div style="left:8.7px;top:105.8px;width:1.0px;height:3.6px;background:#333"></div>
<svg style="left:17.6px;top:102.6px" width="12.4" height="10.4" viewBox="0 0 16 13" preserveAspectRatio="none"><use href="#folder"/></svg>
<span class="t " style="left:34.4px;top:101.6px;">_ptch_ivy_solid</span>
<div style="left:9.2px;top:119.7px;width:9.0px;height:1.0px;background:#d6d6d6"></div>
<div style="left:5.6px;top:116.6px;width:7.2px;height:7.2px;box-sizing:border-box;border:1px solid #969696;background:#fff"></div><div style="left:7.4px;top:119.7px;width:3.6px;height:1.0px;background:#333"></div><div style="left:8.7px;top:118.4px;width:1.0px;height:3.6px;background:#333"></div>
<svg style="left:17.6px;top:115.2px" width="12.4" height="10.4" viewBox="0 0 16 13" preserveAspectRatio="none"><use href="#folder"/></svg>
<span class="t " style="left:34.4px;top:114.2px;">dirt_finedarkjungdirt</span>
<div style="left:9.2px;top:132.3px;width:9.0px;height:1.0px;background:#d6d6d6"></div>
<div style="left:5.6px;top:129.2px;width:7.2px;height:7.2px;box-sizing:border-box;border:1px solid #969696;background:#fff"></div><div style="left:7.4px;top:132.3px;width:3.6px;height:1.0px;background:#333"></div><div style="left:8.7px;top:131.0px;width:1.0px;height:3.6px;background:#333"></div>
<svg style="left:17.6px;top:127.8px" width="12.4" height="10.4" viewBox="0 0 16 13" preserveAspectRatio="none"><use href="#folder"/></svg>
<span class="t " style="left:34.4px;top:126.8px;">jung_ptch_grass</span>
<div style="left:9.2px;top:144.9px;width:9.0px;height:1.0px;background:#d6d6d6"></div>
<div style="left:5.6px;top:141.8px;width:7.2px;height:7.2px;box-sizing:border-box;border:1px solid #969696;background:#fff"></div><div style="left:7.4px;top:144.9px;width:3.6px;height:1.0px;background:#333"></div><div style="left:8.7px;top:143.6px;width:1.0px;height:3.6px;background:#333"></div>
<svg style="left:17.6px;top:140.4px" width="12.4" height="10.4" viewBox="0 0 16 13" preserveAspectRatio="none"><use href="#folder"/></svg>
<span class="t " style="left:34.4px;top:139.4px;">frst_fallenleaves</span>
<div style="left:9.2px;top:157.5px;width:9.0px;height:1.0px;background:#d6d6d6"></div>
<div style="left:5.6px;top:154.4px;width:7.2px;height:7.2px;box-sizing:border-box;border:1px solid #969696;background:#fff"></div><div style="left:7.4px;top:157.5px;width:3.6px;height:1.0px;background:#333"></div><div style="left:8.7px;top:156.2px;width:1.0px;height:3.6px;background:#333"></div>
<svg style="left:17.6px;top:153.0px" width="12.4" height="10.4" viewBox="0 0 16 13" preserveAspectRatio="none"><use href="#folder"/></svg>
<span class="t " style="left:34.4px;top:152.0px;">rock_granite_lightplate</span>
<div style="left:9.2px;top:170.2px;width:9.0px;height:1.0px;background:#d6d6d6"></div>
<div style="left:5.6px;top:167.1px;width:7.2px;height:7.2px;box-sizing:border-box;border:1px solid #969696;background:#fff"></div><div style="left:7.4px;top:170.2px;width:3.6px;height:1.0px;background:#333"></div><div style="left:8.7px;top:168.9px;width:1.0px;height:3.6px;background:#333"></div>
<svg style="left:17.6px;top:165.7px" width="12.4" height="10.4" viewBox="0 0 16 13" preserveAspectRatio="none"><use href="#folder"/></svg>
<span class="t " style="left:34.4px;top:164.7px;">Rock outcroppings</span>
<div style="left:9.2px;top:182.8px;width:9.0px;height:1.0px;background:#d6d6d6"></div>
<div style="left:5.6px;top:179.7px;width:7.2px;height:7.2px;box-sizing:border-box;border:1px solid #969696;background:#fff"></div><div style="left:7.4px;top:182.8px;width:3.6px;height:1.0px;background:#333"></div><div style="left:8.7px;top:181.5px;width:1.0px;height:3.6px;background:#333"></div>
<svg style="left:17.6px;top:178.3px" width="12.4" height="10.4" viewBox="0 0 16 13" preserveAspectRatio="none"><use href="#folder"/></svg>
<span class="t " style="left:34.4px;top:177.3px;">grss_lightforestgrass</span>
<div style="left:9.2px;top:195.4px;width:9.0px;height:1.0px;background:#d6d6d6"></div>
<div style="left:5.6px;top:192.3px;width:7.2px;height:7.2px;box-sizing:border-box;border:1px solid #969696;background:#fff"></div><div style="left:7.4px;top:195.4px;width:3.6px;height:1.0px;background:#333"></div><div style="left:8.7px;top:194.1px;width:1.0px;height:3.6px;background:#333"></div>
<svg style="left:17.6px;top:190.9px" width="12.4" height="10.4" viewBox="0 0 16 13" preserveAspectRatio="none"><use href="#folder"/></svg>
<span class="t " style="left:34.4px;top:189.9px;">grss_darkforestgrass</span>
</div>
<div style="left:154.0px;top:563.4px;width:12.4px;height:198.2px;background:#eceae5"></div><div style="left:154.0px;top:563.4px;width:12.4px;height:12.2px;background:#d8d5cd;box-sizing:border-box;border:1px solid;border-color:#f8f7f4 #5c5a56 #5c5a56 #f8f7f4;box-shadow:inset -1px -1px 0 #9c9a94"></div><div style="left:154.0px;top:749.4px;width:12.4px;height:12.2px;background:#d8d5cd;box-sizing:border-box;border:1px solid;border-color:#f8f7f4 #5c5a56 #5c5a56 #f8f7f4;box-shadow:inset -1px -1px 0 #9c9a94"></div><div style="left:154.0px;top:575.6px;width:12.4px;height:89.6px;background:#d8d5cd;box-sizing:border-box;border:1px solid;border-color:#f8f7f4 #5c5a56 #5c5a56 #f8f7f4;box-shadow:inset -1px -1px 0 #9c9a94"></div>
<div style="left:383.0px;top:510.4px;width:372.0px;height:13.4px;background:linear-gradient(90deg,#808080 0%,#858585 35%,#c0c0c0 100%)"></div><span class="t b" style="left:384.3px;top:511.1px;color:#d4d0c8">Radial Flora</span><svg style="left:716.3px;top:512.5px" width="11.9" height="10.2" viewBox="0 0 16 14" preserveAspectRatio="none"><use href="#b_min"/></svg><svg style="left:728.4px;top:512.5px" width="11.9" height="10.2" viewBox="0 0 16 14" preserveAspectRatio="none"><use href="#b_max"/></svg><svg style="left:742.0px;top:512.5px" width="11.9" height="10.2" viewBox="0 0 16 14" preserveAspectRatio="none"><use href="#b_close"/></svg>
<div style="left:383.0px;top:524.0px;width:372.0px;height:28.0px;background:linear-gradient(180deg,#f8f7f4 0%,#efede8 40%,#dedad2 80%,#d4d0c8 100%);border-radius:0 0 4px 0"></div>
<div style="left:385.0px;top:530.0px;width:1.2px;height:1.2px;background:#9c988e"></div><div style="left:385.0px;top:532.4px;width:1.2px;height:1.2px;background:#9c988e"></div><div style="left:385.0px;top:534.8px;width:1.2px;height:1.2px;background:#9c988e"></div><div style="left:385.0px;top:537.2px;width:1.2px;height:1.2px;background:#9c988e"></div><div style="left:385.0px;top:539.6px;width:1.2px;height:1.2px;background:#9c988e"></div>
<svg style="left:390.6px;top:528.2px" width="17" height="17" viewBox="0 0 16 16" preserveAspectRatio="none"><use href="#pic"/></svg>
<svg style="left:417.2px;top:528.2px" width="17" height="17" viewBox="0 0 16 16" preserveAspectRatio="none"><use href="#pic"/></svg>
<svg style="left:444.0px;top:528.2px" width="17" height="17" viewBox="0 0 16 16" preserveAspectRatio="none"><use href="#pic"/></svg>
<svg style="left:471.0px;top:528.2px" width="17" height="17" viewBox="0 0 16 16" preserveAspectRatio="none"><use href="#pic"/></svg>
<div style="left:412.4px;top:529.0px;width:1.0px;height:16.0px;background:#d0ccc2"></div><div style="left:413.4px;top:529.0px;width:1.0px;height:16.0px;background:#f9f8f5"></div>
<div style="left:439.0px;top:529.0px;width:1.0px;height:16.0px;background:#d0ccc2"></div><div style="left:440.0px;top:529.0px;width:1.0px;height:16.0px;background:#f9f8f5"></div>
<div style="left:466.0px;top:529.0px;width:1.0px;height:16.0px;background:#d0ccc2"></div><div style="left:467.0px;top:529.0px;width:1.0px;height:16.0px;background:#f9f8f5"></div>
<div style="left:385.0px;top:562.4px;width:161.4px;height:200.2px;background:#fff;box-sizing:border-box;border:1px solid;border-color:#55534f #ebe9e4 #ebe9e4 #55534f;box-shadow:-1px -1px 0 #9a9892, 1px 1px 0 #fff"></div>
<div style="left:386px;top:563.4px;width:148.6px;height:187px;overflow:hidden">
<div style="left:8.5px;top:5.9px;width:1.0px;height:189.9px;background:#dadada"></div>
<div style="left:22.1px;top:23.6px;width:1.0px;height:20.3px;background:#dadada"></div>
<div style="left:22.1px;top:61.5px;width:1.0px;height:71.0px;background:#dadada"></div>
<div style="left:9.0px;top:5.4px;width:8.0px;height:1.0px;background:#d6d6d6"></div>
<div style="left:5.4px;top:2.3px;width:7.2px;height:7.2px;box-sizing:border-box;border:1px solid #969696;background:#fff"></div><div style="left:7.2px;top:5.4px;width:3.6px;height:1.0px;background:#333"></div><div style="left:8.5px;top:4.1px;width:1.0px;height:3.6px;background:#333"></div>
<span class="t " style="left:18.8px;top:-0.1px;">Grass_decd</span>
<div style="left:9.0px;top:18.1px;width:8.0px;height:1.0px;background:#d6d6d6"></div>
<div style="left:5.4px;top:15.0px;width:7.2px;height:7.2px;box-sizing:border-box;border:1px solid #969696;background:#fff"></div><div style="left:7.2px;top:18.1px;width:3.6px;height:1.0px;background:#333"></div>
<span class="t " style="left:18.8px;top:12.6px;">radial jungle grass</span>
<div style="left:22.6px;top:30.7px;width:9.4px;height:1.0px;background:#d6d6d6"></div>
<span class="t " style="left:34.0px;top:25.2px;">radl_jung_grss</span>
<div style="left:22.6px;top:43.4px;width:9.4px;height:1.0px;background:#d6d6d6"></div>
<span class="t " style="left:34.0px;top:37.9px;">radl_jung_grss_a1</span>
<div style="left:9.0px;top:56.0px;width:8.0px;height:1.0px;background:#d6d6d6"></div>
<div style="left:5.4px;top:52.9px;width:7.2px;height:7.2px;box-sizing:border-box;border:1px solid #969696;background:#fff"></div><div style="left:7.2px;top:56.0px;width:3.6px;height:1.0px;background:#333"></div>
<span class="t " style="left:18.8px;top:50.5px;">ferns</span>
<div style="left:22.6px;top:68.7px;width:9.4px;height:1.0px;background:#d6d6d6"></div>
<span class="t " style="left:34.0px;top:63.2px;">radl_endr_fern_green_longleaf</span>
<div style="left:22.6px;top:81.4px;width:9.4px;height:1.0px;background:#d6d6d6"></div>
<span class="t " style="left:34.0px;top:75.9px;">radl_endr_fern_green_longleaf_a1</span>
<div style="left:22.6px;top:94.0px;width:9.4px;height:1.0px;background:#d6d6d6"></div>
<span class="t " style="left:34.0px;top:88.5px;">radl_endr_fern_olive</span>
<div style="left:22.6px;top:106.7px;width:9.4px;height:1.0px;background:#d6d6d6"></div>
<span class="t " style="left:34.0px;top:101.2px;">radl_endr_fern_olive_a1</span>
<div style="left:22.6px;top:119.3px;width:9.4px;height:1.0px;background:#d6d6d6"></div>
<span class="t " style="left:34.0px;top:113.8px;">radl_endr_fern_green</span>
<div style="left:22.6px;top:132.0px;width:9.4px;height:1.0px;background:#d6d6d6"></div>
<span class="t " style="left:34.0px;top:126.5px;">radl_endr_fern_brown_jumbo</span>
<div style="left:9.0px;top:144.7px;width:8.0px;height:1.0px;background:#d6d6d6"></div>
<div style="left:5.4px;top:141.6px;width:7.2px;height:7.2px;box-sizing:border-box;border:1px solid #969696;background:#fff"></div><div style="left:7.2px;top:144.7px;width:3.6px;height:1.0px;background:#333"></div><div style="left:8.5px;top:143.4px;width:1.0px;height:3.6px;background:#333"></div>
<span class="t " style="left:18.8px;top:139.2px;">Grasslandsgrass1</span>
<div style="left:9.0px;top:157.3px;width:8.0px;height:1.0px;background:#d6d6d6"></div>
<div style="left:5.4px;top:154.2px;width:7.2px;height:7.2px;box-sizing:border-box;border:1px solid #969696;background:#fff"></div><div style="left:7.2px;top:157.3px;width:3.6px;height:1.0px;background:#333"></div><div style="left:8.5px;top:156.0px;width:1.0px;height:3.6px;background:#333"></div>
<span class="t " style="left:18.8px;top:151.8px;">Base_swamp_grass</span>
<div style="left:9.0px;top:170.0px;width:8.0px;height:1.0px;background:#d6d6d6"></div>
<div style="left:5.4px;top:166.9px;width:7.2px;height:7.2px;box-sizing:border-box;border:1px solid #969696;background:#fff"></div><div style="left:7.2px;top:170.0px;width:3.6px;height:1.0px;background:#333"></div><div style="left:8.5px;top:168.7px;width:1.0px;height:3.6px;background:#333"></div>
<span class="t " style="left:18.8px;top:164.5px;">Base_swamp_grass_tall</span>
<div style="left:9.0px;top:182.6px;width:8.0px;height:1.0px;background:#d6d6d6"></div>
<div style="left:5.4px;top:179.5px;width:7.2px;height:7.2px;box-sizing:border-box;border:1px solid #969696;background:#fff"></div><div style="left:7.2px;top:182.6px;width:3.6px;height:1.0px;background:#333"></div><div style="left:8.5px;top:181.3px;width:1.0px;height:3.6px;background:#333"></div>
<span class="t " style="left:18.8px;top:177.1px;">Cattails</span>
</div>
<div style="left:534.6px;top:563.4px;width:11.8px;height:187.0px;background:#eceae5"></div><div style="left:534.6px;top:563.4px;width:11.8px;height:12.2px;background:#d8d5cd;box-sizing:border-box;border:1px solid;border-color:#f8f7f4 #5c5a56 #5c5a56 #f8f7f4;box-shadow:inset -1px -1px 0 #9c9a94"></div><div style="left:534.6px;top:738.2px;width:11.8px;height:12.2px;background:#d8d5cd;box-sizing:border-box;border:1px solid;border-color:#f8f7f4 #5c5a56 #5c5a56 #f8f7f4;box-shadow:inset -1px -1px 0 #9c9a94"></div><div style="left:534.6px;top:575.6px;width:11.8px;height:96.6px;background:#d8d5cd;box-sizing:border-box;border:1px solid;border-color:#f8f7f4 #5c5a56 #5c5a56 #f8f7f4;box-shadow:inset -1px -1px 0 #9c9a94"></div>
<div style="left:386.0px;top:750.4px;width:148.6px;height:11.2px;background:#eceae5"></div><div style="left:386.0px;top:750.4px;width:12.2px;height:11.2px;background:#d8d5cd;box-sizing:border-box;border:1px solid;border-color:#f8f7f4 #5c5a56 #5c5a56 #f8f7f4;box-shadow:inset -1px -1px 0 #9c9a94"></div><div style="left:522.4px;top:750.4px;width:12.2px;height:11.2px;background:#d8d5cd;box-sizing:border-box;border:1px solid;border-color:#f8f7f4 #5c5a56 #5c5a56 #f8f7f4;box-shadow:inset -1px -1px 0 #9c9a94"></div><div style="left:398.2px;top:750.4px;width:108.4px;height:11.2px;background:#d8d5cd;box-sizing:border-box;border:1px solid;border-color:#f8f7f4 #5c5a56 #5c5a56 #f8f7f4;box-shadow:inset -1px -1px 0 #9c9a94"></div>
<div style="left:534.6px;top:750.4px;width:11.8px;height:11.2px;background:#d4d0c8"></div>
<div style="left:762.4px;top:510.6px;width:245.4px;height:13.2px;background:linear-gradient(90deg,#808080 0%,#858585 35%,#c0c0c0 100%)"></div><span class="t b" style="left:763.7px;top:511.2px;color:#d4d0c8">Static Flora</span><svg style="left:969.1px;top:512.7px" width="11.9" height="10.2" viewBox="0 0 16 14" preserveAspectRatio="none"><use href="#b_min"/></svg><svg style="left:981.2px;top:512.7px" width="11.9" height="10.2" viewBox="0 0 16 14" preserveAspectRatio="none"><use href="#b_max"/></svg><svg style="left:994.8px;top:512.7px" width="11.9" height="10.2" viewBox="0 0 16 14" preserveAspectRatio="none"><use href="#b_close"/></svg>
<div style="left:762.4px;top:524.0px;width:245.4px;height:28.0px;background:linear-gradient(180deg,#f8f7f4 0%,#efede8 40%,#dedad2 80%,#d4d0c8 100%);border-radius:0 0 4px 0"></div>
<div style="left:764.4px;top:530.0px;width:1.2px;height:1.2px;background:#9c988e"></div><div style="left:764.4px;top:532.4px;width:1.2px;height:1.2px;background:#9c988e"></div><div style="left:764.4px;top:534.8px;width:1.2px;height:1.2px;background:#9c988e"></div><div style="left:764.4px;top:537.2px;width:1.2px;height:1.2px;background:#9c988e"></div><div style="left:764.4px;top:539.6px;width:1.2px;height:1.2px;background:#9c988e"></div>
<svg style="left:770.0px;top:528.4px" width="17" height="17" viewBox="0 0 16 16" preserveAspectRatio="none"><use href="#pic"/></svg>
<svg style="left:797.0px;top:528.4px" width="17" height="17" viewBox="0 0 16 16" preserveAspectRatio="none"><use href="#pic"/></svg>
<svg style="left:823.8px;top:528.4px" width="17" height="17" viewBox="0 0 16 16" preserveAspectRatio="none"><use href="#pic"/></svg>
<svg style="left:850.6px;top:528.4px" width="17" height="17" viewBox="0 0 16 16" preserveAspectRatio="none"><use href="#pic"/></svg>
<div style="left:792.0px;top:529.0px;width:1.0px;height:16.0px;background:#d0ccc2"></div><div style="left:793.0px;top:529.0px;width:1.0px;height:16.0px;background:#f9f8f5"></div>
<div style="left:818.8px;top:529.0px;width:1.0px;height:16.0px;background:#d0ccc2"></div><div style="left:819.8px;top:529.0px;width:1.0px;height:16.0px;background:#f9f8f5"></div>
<div style="left:845.6px;top:529.0px;width:1.0px;height:16.0px;background:#d0ccc2"></div><div style="left:846.6px;top:529.0px;width:1.0px;height:16.0px;background:#f9f8f5"></div>
<div style="left:763.4px;top:562.6px;width:243.0px;height:200.0px;background:#fff;box-sizing:border-box;border:1px solid;border-color:#55534f #ebe9e4 #ebe9e4 #55534f;box-shadow:-1px -1px 0 #9a9892, 1px 1px 0 #fff"></div>
<div style="left:764.4px;top:563.6px;width:228.4px;height:198px;overflow:hidden">
<div style="left:10.1px;top:6.2px;width:1.0px;height:202.6px;background:#dadada"></div>
<div style="left:25.7px;top:36.5px;width:1.0px;height:71.0px;background:#dadada"></div>
<div style="left:10.6px;top:5.7px;width:8.0px;height:1.0px;background:#d6d6d6"></div>
<div style="left:7.0px;top:2.6px;width:7.2px;height:7.2px;box-sizing:border-box;border:1px solid #969696;background:#fff"></div><div style="left:8.8px;top:5.7px;width:3.6px;height:1.0px;background:#333"></div><div style="left:10.1px;top:4.4px;width:1.0px;height:3.6px;background:#333"></div>
<span class="t w" style="left:20.2px;top:0.2px;">jungle trees-bamboo-mega</span>
<div style="left:10.6px;top:18.4px;width:8.0px;height:1.0px;background:#d6d6d6"></div>
<div style="left:7.0px;top:15.3px;width:7.2px;height:7.2px;box-sizing:border-box;border:1px solid #969696;background:#fff"></div><div style="left:8.8px;top:18.4px;width:3.6px;height:1.0px;background:#333"></div><div style="left:10.1px;top:17.1px;width:1.0px;height:3.6px;background:#333"></div>
<span class="t w" style="left:20.2px;top:12.9px;">ferns</span>
<div style="left:10.6px;top:31.0px;width:8.0px;height:1.0px;background:#d6d6d6"></div>
<div style="left:7.0px;top:27.9px;width:7.2px;height:7.2px;box-sizing:border-box;border:1px solid #969696;background:#fff"></div><div style="left:8.8px;top:31.0px;width:3.6px;height:1.0px;background:#333"></div>
<span class="t w" style="left:20.2px;top:25.5px;">JungleCanopyTrees</span>
<div style="left:26.2px;top:43.7px;width:8.0px;height:1.0px;background:#d6d6d6"></div>
<span class="t w" style="left:35.4px;top:38.2px;">decd_treecanopy.apt</span>
<div style="left:26.2px;top:56.3px;width:8.0px;height:1.0px;background:#d6d6d6"></div>
<span class="t w" style="left:35.4px;top:50.8px;">decd_treecanopy_a1.apt</span>
<div style="left:26.2px;top:69.0px;width:8.0px;height:1.0px;background:#d6d6d6"></div>
<span class="t w" style="left:35.4px;top:63.5px;">decd_treecanopy_a2.apt</span>
<div style="left:26.2px;top:81.7px;width:8.0px;height:1.0px;background:#d6d6d6"></div>
<span class="t w" style="left:35.4px;top:76.2px;">decd_treecanopy_a3.apt</span>
<div style="left:26.2px;top:94.3px;width:8.0px;height:1.0px;background:#d6d6d6"></div>
<span class="t w" style="left:35.4px;top:88.8px;">decd_dogwoodtreebranches.apt</span>
<div style="left:26.2px;top:107.0px;width:8.0px;height:1.0px;background:#d6d6d6"></div>
<span class="t w" style="left:35.4px;top:101.5px;">decd_mapletreeleaves_a2.apt</span>
<div style="left:10.6px;top:119.6px;width:8.0px;height:1.0px;background:#d6d6d6"></div>
<div style="left:7.0px;top:116.5px;width:7.2px;height:7.2px;box-sizing:border-box;border:1px solid #969696;background:#fff"></div><div style="left:8.8px;top:119.6px;width:3.6px;height:1.0px;background:#333"></div><div style="left:10.1px;top:118.3px;width:1.0px;height:3.6px;background:#333"></div>
<span class="t w" style="left:20.2px;top:114.1px;">jungle small flora</span>
<div style="left:10.6px;top:132.3px;width:8.0px;height:1.0px;background:#d6d6d6"></div>
<div style="left:7.0px;top:129.2px;width:7.2px;height:7.2px;box-sizing:border-box;border:1px solid #969696;background:#fff"></div><div style="left:8.8px;top:132.3px;width:3.6px;height:1.0px;background:#333"></div><div style="left:10.1px;top:131.0px;width:1.0px;height:3.6px;background:#333"></div>
<span class="t w" style="left:20.2px;top:126.8px;">Greya Rocks</span>
<div style="left:10.6px;top:145.0px;width:8.0px;height:1.0px;background:#d6d6d6"></div>
<div style="left:7.0px;top:141.9px;width:7.2px;height:7.2px;box-sizing:border-box;border:1px solid #969696;background:#fff"></div><div style="left:8.8px;top:145.0px;width:3.6px;height:1.0px;background:#333"></div><div style="left:10.1px;top:143.7px;width:1.0px;height:3.6px;background:#333"></div>
<span class="t w" style="left:20.2px;top:139.5px;">SwampCollidableA</span>
<div style="left:10.6px;top:157.6px;width:8.0px;height:1.0px;background:#d6d6d6"></div>
<div style="left:7.0px;top:154.5px;width:7.2px;height:7.2px;box-sizing:border-box;border:1px solid #969696;background:#fff"></div><div style="left:8.8px;top:157.6px;width:3.6px;height:1.0px;background:#333"></div><div style="left:10.1px;top:156.3px;width:1.0px;height:3.6px;background:#333"></div>
<span class="t w" style="left:20.2px;top:152.1px;">SwampNonColA</span>
<div style="left:10.6px;top:170.3px;width:8.0px;height:1.0px;background:#d6d6d6"></div>
<div style="left:7.0px;top:167.2px;width:7.2px;height:7.2px;box-sizing:border-box;border:1px solid #969696;background:#fff"></div><div style="left:8.8px;top:170.3px;width:3.6px;height:1.0px;background:#333"></div><div style="left:10.1px;top:169.0px;width:1.0px;height:3.6px;background:#333"></div>
<span class="t w" style="left:20.2px;top:164.8px;">SwampWaterwaysCol</span>
<div style="left:10.6px;top:182.9px;width:8.0px;height:1.0px;background:#d6d6d6"></div>
<div style="left:7.0px;top:179.8px;width:7.2px;height:7.2px;box-sizing:border-box;border:1px solid #969696;background:#fff"></div><div style="left:8.8px;top:182.9px;width:3.6px;height:1.0px;background:#333"></div><div style="left:10.1px;top:181.6px;width:1.0px;height:3.6px;background:#333"></div>
<span class="t w" style="left:20.2px;top:177.4px;">LakeOctirCol</span>
<div style="left:10.6px;top:195.6px;width:8.0px;height:1.0px;background:#d6d6d6"></div>
<div style="left:7.0px;top:192.5px;width:7.2px;height:7.2px;box-sizing:border-box;border:1px solid #969696;background:#fff"></div><div style="left:8.8px;top:195.6px;width:3.6px;height:1.0px;background:#333"></div><div style="left:10.1px;top:194.3px;width:1.0px;height:3.6px;background:#333"></div>
<span class="t w" style="left:20.2px;top:190.1px;">LakeOctirNonCol</span>
</div>
<div style="left:992.8px;top:563.6px;width:12.6px;height:198.0px;background:#eceae5"></div><div style="left:992.8px;top:563.6px;width:12.6px;height:12.2px;background:#d8d5cd;box-sizing:border-box;border:1px solid;border-color:#f8f7f4 #5c5a56 #5c5a56 #f8f7f4;box-shadow:inset -1px -1px 0 #9c9a94"></div><div style="left:992.8px;top:749.4px;width:12.6px;height:12.2px;background:#d8d5cd;box-sizing:border-box;border:1px solid;border-color:#f8f7f4 #5c5a56 #5c5a56 #f8f7f4;box-shadow:inset -1px -1px 0 #9c9a94"></div><div style="left:992.8px;top:576.0px;width:12.6px;height:107.4px;background:#d8d5cd;box-sizing:border-box;border:1px solid;border-color:#f8f7f4 #5c5a56 #5c5a56 #f8f7f4;box-shadow:inset -1px -1px 0 #9c9a94"></div>
<svg style="left:173.3px;top:562.1px" width="202.3" height="200.9" viewBox="0 0 202.3 200.9"><rect width="202.3" height="200.9" fill="#858069"/><rect width="202.3" height="200.9" filter="url(#noiseA)"/><rect width="202.3" height="200.9" filter="url(#noiseA2)"/><circle cx="10.4" cy="9.6" r="24.9" fill="url(#gred)"/><circle cx="149.8" cy="31.4" r="16.0" fill="url(#gred)"/><circle cx="193.6" cy="77.9" r="16.0" fill="url(#gred)"/><circle cx="145.7" cy="110.7" r="21.3" fill="url(#gred)"/><circle cx="45.9" cy="88.9" r="16.0" fill="url(#gred)"/><circle cx="117.0" cy="12.3" r="14.2" fill="url(#gred)"/><circle cx="182.7" cy="151.8" r="16.0" fill="url(#gred)"/><circle cx="51.4" cy="187.3" r="17.8" fill="url(#gred)"/><circle cx="106.1" cy="170.9" r="14.2" fill="url(#gred)"/><circle cx="21.3" cy="64.3" r="14.2" fill="url(#gred)"/><circle cx="171.7" cy="28.7" r="12.4" fill="url(#gred)"/><circle cx="87.0" cy="72.5" r="14.2" fill="url(#gred)"/><circle cx="111.6" cy="113.5" r="12.4" fill="url(#gred)"/><circle cx="18.6" cy="149.0" r="16.0" fill="url(#gred)"/><circle cx="196.3" cy="12.3" r="12.4" fill="url(#gred)"/><circle cx="45.9" cy="13.7" r="10" fill="url(#ggrn)"/><path d="M45.9,13.7l-8.0,2.5M45.9,13.7l6.9,-3.6M45.9,13.7l-8.5,-0.4M45.9,13.7l3.2,7.4M45.9,13.7l-6.7,-7.1M45.9,13.7l5.7,3.8M45.9,13.7l8.3,5.3M45.9,13.7l-1.8,-4.9M45.9,13.7l10.7,-1.2M45.9,13.7l-4.9,-7.2M45.9,13.7l2.8,4.3M45.9,13.7l-5.3,-1.0" stroke="#9cc89c" stroke-width="0.8" opacity="0.75" fill="none"/><circle cx="91.1" cy="9.6" r="10" fill="url(#ggrn)"/><path d="M91.1,9.6l2.4,6.0M91.1,9.6l7.6,1.5M91.1,9.6l-9.4,3.7M91.1,9.6l-8.8,-1.1M91.1,9.6l-9.0,0.0M91.1,9.6l-6.4,1.8M91.1,9.6l11.0,-0.2M91.1,9.6l5.0,-7.8M91.1,9.6l-2.5,5.8M91.1,9.6l-1.3,5.3M91.1,9.6l0.8,-7.4M91.1,9.6l4.2,-6.0" stroke="#9cc89c" stroke-width="0.8" opacity="0.75" fill="none"/><circle cx="138.9" cy="15.0" r="10" fill="url(#ggrn)"/><path d="M138.9,15.0l9.7,-2.6M138.9,15.0l6.3,0.0M138.9,15.0l6.6,-4.2M138.9,15.0l7.3,-0.9M138.9,15.0l7.9,3.9M138.9,15.0l1.2,-6.5M138.9,15.0l6.0,3.6M138.9,15.0l9.3,-2.1M138.9,15.0l4.8,4.4M138.9,15.0l4.3,3.2M138.9,15.0l1.8,-5.8M138.9,15.0l-7.2,-2.8" stroke="#9cc89c" stroke-width="0.8" opacity="0.75" fill="none"/><circle cx="10.4" cy="41.0" r="10" fill="url(#ggrn)"/><path d="M10.4,41.0l3.4,8.7M10.4,41.0l6.0,6.5M10.4,41.0l5.6,5.0M10.4,41.0l1.5,6.4M10.4,41.0l9.7,-1.8M10.4,41.0l-3.4,9.7M10.4,41.0l1.8,7.1M10.4,41.0l5.4,-7.0M10.4,41.0l8.8,6.4M10.4,41.0l1.5,6.4M10.4,41.0l1.0,-6.9M10.4,41.0l-1.6,5.2" stroke="#9cc89c" stroke-width="0.8" opacity="0.75" fill="none"/><circle cx="70.5" cy="36.9" r="10" fill="url(#ggrn)"/><path d="M70.5,36.9l7.2,4.6M70.5,36.9l0.4,8.6M70.5,36.9l-5.3,5.6M70.5,36.9l7.6,-2.0M70.5,36.9l-9.1,-4.6M70.5,36.9l2.4,5.4M70.5,36.9l8.3,-5.4M70.5,36.9l0.0,6.1M70.5,36.9l-0.7,-10.6M70.5,36.9l3.5,10.1M70.5,36.9l6.4,-5.8M70.5,36.9l-5.0,2.7" stroke="#9cc89c" stroke-width="0.8" opacity="0.75" fill="none"/><circle cx="138.9" cy="41.0" r="10" fill="url(#ggrn)"/><path d="M138.9,41.0l10.5,2.6M138.9,41.0l0.7,9.2M138.9,41.0l-0.4,9.9M138.9,41.0l-5.6,-3.9M138.9,41.0l4.2,8.3M138.9,41.0l5.8,2.7M138.9,41.0l-9.4,-3.7M138.9,41.0l-5.0,-4.4M138.9,41.0l5.4,-3.1M138.9,41.0l6.6,0.7M138.9,41.0l-5.1,1.8M138.9,41.0l3.2,6.5" stroke="#9cc89c" stroke-width="0.8" opacity="0.75" fill="none"/><circle cx="54.1" cy="58.8" r="10" fill="url(#ggrn)"/><path d="M54.1,58.8l-5.2,-2.5M54.1,58.8l-6.7,7.9M54.1,58.8l8.9,-1.1M54.1,58.8l-3.1,-7.9M54.1,58.8l3.3,4.0M54.1,58.8l10.4,1.2M54.1,58.8l-3.3,-10.3M54.1,58.8l8.7,1.2M54.1,58.8l-9.3,1.0M54.1,58.8l-4.6,10.0M54.1,58.8l7.4,3.8M54.1,58.8l-0.8,-10.4" stroke="#9cc89c" stroke-width="0.8" opacity="0.75" fill="none"/><circle cx="182.7" cy="61.5" r="10" fill="url(#ggrn)"/><path d="M182.7,61.5l-0.7,-9.2M182.7,61.5l2.8,-10.1M182.7,61.5l-5.4,7.3M182.7,61.5l8.3,-6.0M182.7,61.5l-8.5,4.8M182.7,61.5l5.5,-6.4M182.7,61.5l-5.2,-5.2M182.7,61.5l-7.5,-4.3M182.7,61.5l7.7,4.3M182.7,61.5l10.3,-0.4M182.7,61.5l-1.0,-7.3M182.7,61.5l-0.8,-8.4" stroke="#9cc89c" stroke-width="0.8" opacity="0.75" fill="none"/><circle cx="10.4" cy="80.7" r="10" fill="url(#ggrn)"/><path d="M10.4,80.7l-9.3,3.7M10.4,80.7l8.2,4.8M10.4,80.7l8.5,1.6M10.4,80.7l-6.3,0.8M10.4,80.7l-2.5,-7.6M10.4,80.7l-7.9,-6.9M10.4,80.7l-0.2,5.1M10.4,80.7l-2.9,8.6M10.4,80.7l1.8,5.8M10.4,80.7l7.4,-5.0M10.4,80.7l-9.7,3.7M10.4,80.7l-4.2,8.0" stroke="#9cc89c" stroke-width="0.8" opacity="0.75" fill="none"/><circle cx="78.8" cy="95.7" r="10" fill="url(#ggrn)"/><path d="M78.8,95.7l2.4,7.2M78.8,95.7l3.6,-9.8M78.8,95.7l5.3,-5.0M78.8,95.7l-6.0,-3.4M78.8,95.7l5.2,6.0M78.8,95.7l5.3,-8.6M78.8,95.7l-2.6,-10.4M78.8,95.7l-1.0,5.9M78.8,95.7l-6.3,2.0M78.8,95.7l1.7,7.3M78.8,95.7l-5.6,-5.7M78.8,95.7l-4.0,9.2" stroke="#9cc89c" stroke-width="0.8" opacity="0.75" fill="none"/><circle cx="132.1" cy="90.2" r="10" fill="url(#ggrn)"/><path d="M132.1,90.2l7.7,-0.9M132.1,90.2l4.6,2.3M132.1,90.2l3.7,-3.8M132.1,90.2l-2.2,-8.1M132.1,90.2l-3.5,9.1M132.1,90.2l5.8,0.7M132.1,90.2l-4.9,1.4M132.1,90.2l3.1,-5.6M132.1,90.2l3.3,4.1M132.1,90.2l-5.3,-5.6M132.1,90.2l-6.1,-6.5M132.1,90.2l3.8,-10.1" stroke="#9cc89c" stroke-width="0.8" opacity="0.75" fill="none"/><circle cx="25.4" cy="118.9" r="10" fill="url(#ggrn)"/><path d="M25.4,118.9l-2.5,-5.7M25.4,118.9l-6.0,0.9M25.4,118.9l7.8,0.5M25.4,118.9l-1.4,-5.9M25.4,118.9l-1.0,7.0M25.4,118.9l-2.6,-7.7M25.4,118.9l-7.2,-6.3M25.4,118.9l-7.6,6.0M25.4,118.9l4.6,-3.1M25.4,118.9l8.5,-3.8M25.4,118.9l5.3,5.6M25.4,118.9l-7.4,-7.4" stroke="#9cc89c" stroke-width="0.8" opacity="0.75" fill="none"/><circle cx="190.9" cy="127.2" r="10" fill="url(#ggrn)"/><path d="M190.9,127.2l-6.0,5.9M190.9,127.2l7.1,-6.7M190.9,127.2l7.3,-2.7M190.9,127.2l-3.6,-5.1M190.9,127.2l-1.7,-9.8M190.9,127.2l-5.9,-7.2M190.9,127.2l2.4,10.1M190.9,127.2l10.8,-1.3M190.9,127.2l-9.5,-2.2M190.9,127.2l-4.5,9.5M190.9,127.2l4.4,-5.6M190.9,127.2l6.6,3.8" stroke="#9cc89c" stroke-width="0.8" opacity="0.75" fill="none"/><circle cx="148.5" cy="138.1" r="10" fill="url(#ggrn)"/><path d="M148.5,138.1l-9.1,-3.0M148.5,138.1l-5.2,0.4M148.5,138.1l2.0,-5.0M148.5,138.1l1.9,-5.7M148.5,138.1l-5.0,8.4M148.5,138.1l3.7,4.6M148.5,138.1l-9.3,-1.0M148.5,138.1l4.9,-7.7M148.5,138.1l7.5,-2.7M148.5,138.1l5.2,-1.7M148.5,138.1l1.5,8.0M148.5,138.1l-2.3,9.1" stroke="#9cc89c" stroke-width="0.8" opacity="0.75" fill="none"/><circle cx="56.9" cy="151.8" r="10" fill="url(#ggrn)"/><path d="M56.9,151.8l-5.2,-6.2M56.9,151.8l4.6,-7.0M56.9,151.8l-2.8,6.7M56.9,151.8l5.9,-8.6M56.9,151.8l2.6,9.8M56.9,151.8l8.0,-1.6M56.9,151.8l-5.6,-2.7M56.9,151.8l-7.8,-1.8M56.9,151.8l-4.1,-3.2M56.9,151.8l7.9,-1.5M56.9,151.8l-8.0,5.7M56.9,151.8l-7.3,-3.1" stroke="#9cc89c" stroke-width="0.8" opacity="0.75" fill="none"/><circle cx="160.8" cy="158.6" r="10" fill="url(#ggrn)"/><path d="M160.8,158.6l-2.0,-5.0M160.8,158.6l-7.3,-1.8M160.8,158.6l10.2,-2.8M160.8,158.6l-0.9,7.8M160.8,158.6l5.3,5.4M160.8,158.6l4.2,-9.5M160.8,158.6l-6.8,1.0M160.8,158.6l3.1,8.1M160.8,158.6l5.2,-2.6M160.8,158.6l0.9,-5.0M160.8,158.6l2.2,6.0M160.8,158.6l-2.7,-6.4" stroke="#9cc89c" stroke-width="0.8" opacity="0.75" fill="none"/><circle cx="141.6" cy="173.6" r="10" fill="url(#ggrn)"/><path d="M141.6,173.6l-5.4,6.9M141.6,173.6l7.4,5.7M141.6,173.6l5.8,5.6M141.6,173.6l-0.0,6.2M141.6,173.6l-7.5,-1.4M141.6,173.6l-5.3,5.3M141.6,173.6l-5.9,-1.1M141.6,173.6l2.5,8.4M141.6,173.6l-5.3,-6.3M141.6,173.6l5.2,-7.0M141.6,173.6l4.0,-5.0M141.6,173.6l-0.6,-9.8" stroke="#9cc89c" stroke-width="0.8" opacity="0.75" fill="none"/><circle cx="29.5" cy="168.2" r="10" fill="url(#ggrn)"/><path d="M29.5,168.2l5.6,-4.0M29.5,168.2l-4.2,9.7M29.5,168.2l2.2,10.8M29.5,168.2l4.4,-3.8M29.5,168.2l0.6,9.3M29.5,168.2l-0.3,5.6M29.5,168.2l3.7,-6.5M29.5,168.2l1.4,-5.6M29.5,168.2l-7.5,5.2M29.5,168.2l6.2,0.7M29.5,168.2l-4.3,-9.5M29.5,168.2l5.6,-1.1" stroke="#9cc89c" stroke-width="0.8" opacity="0.75" fill="none"/><circle cx="76.0" cy="191.4" r="10" fill="url(#ggrn)"/><path d="M76.0,191.4l-9.5,-0.3M76.0,191.4l-9.1,-0.2M76.0,191.4l2.0,5.0M76.0,191.4l4.1,3.2M76.0,191.4l-7.7,-2.6M76.0,191.4l-5.3,-2.5M76.0,191.4l2.5,5.7M76.0,191.4l5.9,-9.2M76.0,191.4l5.0,-2.5M76.0,191.4l9.9,4.1M76.0,191.4l-9.3,2.3M76.0,191.4l-3.6,6.9" stroke="#9cc89c" stroke-width="0.8" opacity="0.75" fill="none"/><circle cx="114.3" cy="191.4" r="10" fill="url(#ggrn)"/><path d="M114.3,191.4l-7.5,-0.7M114.3,191.4l-4.1,-3.0M114.3,191.4l-3.0,-9.6M114.3,191.4l3.2,7.0M114.3,191.4l-0.5,-7.4M114.3,191.4l2.0,5.6M114.3,191.4l-5.1,-0.4M114.3,191.4l7.7,-6.1M114.3,191.4l-2.9,-9.8M114.3,191.4l-5.1,-5.4M114.3,191.4l-6.5,-4.7M114.3,191.4l9.8,-1.1" stroke="#9cc89c" stroke-width="0.8" opacity="0.75" fill="none"/><circle cx="192.2" cy="184.6" r="10" fill="url(#ggrn)"/><path d="M192.2,184.6l-0.5,10.5M192.2,184.6l-0.3,-9.7M192.2,184.6l2.9,-6.8M192.2,184.6l8.2,-6.2M192.2,184.6l-3.3,-9.0M192.2,184.6l0.7,-7.4M192.2,184.6l-0.9,-5.3M192.2,184.6l-4.3,6.6M192.2,184.6l7.1,0.5M192.2,184.6l-5.6,-6.7M192.2,184.6l1.2,10.6M192.2,184.6l-3.5,-6.1" stroke="#9cc89c" stroke-width="0.8" opacity="0.75" fill="none"/><circle cx="88.3" cy="132.6" r="10" fill="url(#ggrn)"/><path d="M88.3,132.6l-4.5,-7.1M88.3,132.6l-7.2,-1.5M88.3,132.6l8.9,-0.0M88.3,132.6l-2.9,-9.1M88.3,132.6l5.1,-0.6M88.3,132.6l-7.1,-6.3M88.3,132.6l-0.3,7.4M88.3,132.6l5.9,1.9M88.3,132.6l-4.0,3.9M88.3,132.6l-0.1,10.4M88.3,132.6l-7.7,-2.5M88.3,132.6l8.2,-1.7" stroke="#9cc89c" stroke-width="0.8" opacity="0.75" fill="none"/><circle cx="158.1" cy="17.8" r="10" fill="url(#ggrn)"/><path d="M158.1,17.8l8.8,-0.3M158.1,17.8l2.0,-5.1M158.1,17.8l-7.8,-5.5M158.1,17.8l10.2,3.0M158.1,17.8l4.2,6.6M158.1,17.8l3.9,7.0M158.1,17.8l-4.1,-3.4M158.1,17.8l7.1,-2.5M158.1,17.8l-8.5,-1.4M158.1,17.8l-4.5,5.0M158.1,17.8l-4.7,-6.9M158.1,17.8l-1.9,9.1" stroke="#9cc89c" stroke-width="0.8" opacity="0.75" fill="none"/><circle cx="185.4" cy="45.1" r="10" fill="url(#ggrn)"/><path d="M185.4,45.1l-1.5,4.9M185.4,45.1l0.2,5.3M185.4,45.1l5.3,7.9M185.4,45.1l-8.0,6.6M185.4,45.1l-0.1,-5.3M185.4,45.1l10.6,-0.8M185.4,45.1l9.3,4.6M185.4,45.1l-7.1,3.4M185.4,45.1l6.4,-1.1M185.4,45.1l-10.5,-1.6M185.4,45.1l-1.3,-7.7M185.4,45.1l9.8,-1.3" stroke="#9cc89c" stroke-width="0.8" opacity="0.75" fill="none"/><circle cx="145.7" cy="72.5" r="10" fill="url(#ggrn)"/><path d="M145.7,72.5l-4.5,-3.4M145.7,72.5l-5.5,-5.4M145.7,72.5l1.5,5.1M145.7,72.5l-5.7,-1.0M145.7,72.5l-8.4,3.2M145.7,72.5l-6.3,1.8M145.7,72.5l-6.5,-3.7M145.7,72.5l1.4,-8.1M145.7,72.5l10.7,-0.2M145.7,72.5l-0.6,-6.4M145.7,72.5l7.8,6.8M145.7,72.5l1.9,-8.5" stroke="#9cc89c" stroke-width="0.8" opacity="0.75" fill="none"/><circle cx="59.6" cy="176.4" r="10" fill="url(#ggrn)"/><path d="M59.6,176.4l-4.2,5.1M59.6,176.4l-3.3,-7.7M59.6,176.4l-7.4,-4.8M59.6,176.4l0.1,-6.1M59.6,176.4l0.1,10.9M59.6,176.4l8.9,-5.2M59.6,176.4l5.2,1.3M59.6,176.4l-1.0,7.5M59.6,176.4l-4.0,-3.9M59.6,176.4l-5.2,-1.4M59.6,176.4l7.8,4.7M59.6,176.4l-8.3,-2.7" stroke="#9cc89c" stroke-width="0.8" opacity="0.75" fill="none"/><circle cx="6.3" cy="183.2" r="10" fill="url(#ggrn)"/><path d="M6.3,183.2l-5.5,5.6M6.3,183.2l1.7,6.8M6.3,183.2l-0.3,-10.0M6.3,183.2l5.1,2.6M6.3,183.2l3.2,-8.1M6.3,183.2l0.7,-6.2M6.3,183.2l-5.8,3.0M6.3,183.2l2.7,-6.7M6.3,183.2l-6.2,-9.0M6.3,183.2l-3.8,7.4M6.3,183.2l-0.3,-10.5M6.3,183.2l-6.5,3.2" stroke="#9cc89c" stroke-width="0.8" opacity="0.75" fill="none"/><circle cx="108.8" cy="50.6" r="10" fill="url(#ggrn)"/><path d="M108.8,50.6l8.4,5.9M108.8,50.6l4.8,2.6M108.8,50.6l-7.3,-3.1M108.8,50.6l-2.7,-6.2M108.8,50.6l0.9,-5.4M108.8,50.6l2.1,8.7M108.8,50.6l5.9,3.4M108.8,50.6l-1.4,-9.1M108.8,50.6l-1.2,5.7M108.8,50.6l-5.9,7.3M108.8,50.6l-3.8,4.2M108.8,50.6l-2.1,-8.1" stroke="#9cc89c" stroke-width="0.8" opacity="0.75" fill="none"/><circle cx="171.7" cy="118.9" r="10" fill="url(#ggrn)"/><path d="M171.7,118.9l9.3,-5.2M171.7,118.9l6.5,-3.9M171.7,118.9l2.2,-6.5M171.7,118.9l-3.0,6.7M171.7,118.9l9.5,-4.1M171.7,118.9l0.1,7.2M171.7,118.9l-4.8,5.4M171.7,118.9l-5.8,4.5M171.7,118.9l2.8,7.9M171.7,118.9l2.4,-7.9M171.7,118.9l4.3,-7.2M171.7,118.9l4.3,8.6" stroke="#9cc89c" stroke-width="0.8" opacity="0.75" fill="none"/><path d="M178,57l6,0M110,114l-6,1M163,13l-1,7M17,16l-5,6M17,127l6,3M131,49l5,4M106,154l2,4M196,135l0,6M146,142l-5,1M167,134l-6,3M169,179l-6,1M106,143l-4,3M85,29l-5,6M76,34l4,3M59,195l4,1M23,130l-3,3M13,92l-2,7M7,22l3,2M48,144l-1,4M37,56l6,4M63,110l-5,3M53,178l-5,1M111,192l0,4M10,190l-4,3M107,104l5,6M133,48l5,0M75,160l-4,5M32,32l2,4M176,104l-3,7M54,107l6,3M0,165l-6,3M17,54l-2,3M97,94l-6,1M173,61l-4,3M185,18l-3,2M110,106l6,3M63,62l4,1M95,144l3,6M21,79l1,8M168,131l5,0M144,48l-1,5M2,199l-3,2M125,58l2,5M60,68l2,6M52,40l-3,3M191,113l-3,4M167,19l3,1M137,142l4,3M169,119l4,1M32,25l1,3M186,86l-0,6M155,165l2,4M83,3l2,6M199,159l-3,5M4,67l3,6M22,76l-0,7M167,123l6,3M183,110l2,5M29,143l-6,0M145,168l6,4M127,40l4,1M117,140l4,7M73,93l7,3M27,182l-1,6M113,53l-8,2M165,121l7,3M58,180l4,4M168,37l-1,3M6,36l-8,0M133,62l-3,6M77,119l-3,2M40,94l4,2M115,35l-0,4M115,67l-1,3M136,29l-6,1M95,83l-2,6M153,151l0,8M170,172l1,5M114,182l-0,6M87,182l2,3M147,181l-4,4M152,61l-1,3M25,90l-0,5M11,140l-0,4M62,79l2,2M184,194l-4,6M85,162l5,4M115,181l7,2M25,108l-3,0M49,60l2,3M181,164l2,5M118,9l7,1M62,100l-8,2M96,41l5,6M181,39l-4,2M96,35l-7,3M41,127l6,4M10,21l-3,3M182,175l-2,3M141,188l1,3M45,62l-2,3M37,47l-3,6M75,133l-6,2M46,60l-6,1M56,129l8,2M89,106l-0,3M121,57l5,5M18,57l-3,3M56,110l6,4M200,7l1,7M78,187l0,4M112,130l3,6M158,104l-0,7M138,105l-4,1M158,33l-1,4M89,155l-5,4M48,98l5,4M101,7l-2,6M116,175l3,2M4,100l1,5M53,160l7,2M115,109l-3,3M30,62l5,1M126,106l4,4M18,165l4,2M32,139l-6,4M12,82l2,4M196,8l0,7M200,29l1,7M8,48l-3,1M79,60l1,3M7,200l-5,5M47,51l-1,4M93,187l2,4M199,123l5,1M131,12l3,6M175,119l-5,2M79,169l3,6M44,70l5,3M33,41l4,3M62,90l-6,0M175,41l1,3M140,73l2,2M37,53l3,7M145,54l2,3M189,72l-5,4M184,4l3,4M17,177l4,6M105,11l1,4M8,30l-1,3M63,85l-1,4M143,52l-4,5M30,41l4,5M82,78l-4,2M59,69l2,2M5,127l-1,7M197,60l-4,7M44,138l-4,7M176,47l-1,3M87,79l5,1M66,100l2,3M81,95l5,3M49,19l2,4M31,117l-3,5M142,5l2,5M13,81l5,1M119,94l2,4M5,70l-5,2M53,134l4,3M124,192l2,5M191,155l-2,6M83,83l5,5M178,77l-3,1M27,102l3,4M198,30l3,2M138,47l6,0M80,48l0,6M111,125l-1,7M196,67l3,7M63,144l-4,5M195,166l5,3M99,113l2,4M152,107l3,3M66,36l-0,4M13,14l6,2M23,91l-4,4M33,174l-3,1M51,102l-4,3M145,51l-3,4M68,153l-6,3M115,84l-4,5M168,161l5,2M135,46l3,2M118,189l-4,0M139,84l-2,5M189,199l6,1M24,9l4,5M201,24l2,3M110,97l2,4M162,168l3,4M125,154l-5,0M140,110l-3,2M35,22l-4,1M99,24l2,3M114,29l-2,4M46,97l2,4M10,13l-4,2M16,37l0,8M41,174l0,5M163,80l6,1M133,125l5,6M175,200l1,7M147,35l4,0M24,15l3,6M63,103l4,0M194,2l-1,7M160,148l2,7M167,154l-4,0M192,81l-3,3M184,5l-1,4M79,74l-3,6M74,128l2,4M183,65l4,1M150,42l-4,4M138,36l4,1M71,87l6,0M82,65l-1,8M41,177l4,6M22,198l2,8M44,82l-2,3M55,136l-5,1M37,72l-4,0M128,76l-2,4M125,178l-6,3M102,114l7,3M140,91l-3,4M78,46l-2,6M104,6l-2,5M120,119l-4,1M95,199l-3,3M149,199l2,7M26,199l0,4M170,130l-7,1M161,103l-3,0M176,143l5,5M92,108l-4,2M57,129l6,1M159,99l5,5M173,155l-1,7M161,30l1,3M7,69l-7,3M24,37l2,7M125,181l8,2M42,126l-6,3M40,134l1,3M69,63l-2,4M122,140l3,2M140,94l3,1M190,123l2,4M201,139l-3,4M63,82l6,3M86,165l1,5M102,189l3,6M48,116l5,6M58,172l-3,4M189,78l-4,4M91,13l1,4M89,192l4,5M136,49l1,4M181,51l1,5M166,171l-2,5M20,180l5,1M76,145l-2,4M182,191l6,0M95,73l1,5M136,122l-8,1M201,79l-5,3M142,200l5,1M81,132l6,5M42,74l4,2M150,17l5,3M126,149l5,5M148,156l5,2M3,173l-7,1M5,71l-1,6M23,159l3,4M25,114l3,1M104,59l-3,3M84,11l4,3M113,92l-3,2M172,31l-6,1M82,123l-7,3M84,2l6,3M149,143l5,3M6,22l5,6M130,170l5,1M16,52l7,3M67,98l-3,7M191,114l-0,8M80,60l-3,3M74,86l0,5M87,91l7,1M12,106l-1,5M45,20l2,4M98,46l-4,4M2,82l-3,0M120,193l2,5M75,61l-2,6M64,100l-0,7M11,19l3,3M161,85l-5,2M58,137l8,2M168,66l4,6M159,129l7,1M10,126l-1,8M129,4l-7,1M117,1l-3,4M137,198l-3,1M158,89l-3,3M91,88l4,2" stroke="#aab490" stroke-width="0.6" opacity="0.45" fill="none"/><path d="M149,14l5,2M135,110l2,1M63,192l-1,6M43,83l-1,5M25,176l0,2M87,76l-3,5M100,139l2,5M21,149l4,2M41,70l3,2M120,104l1,4M170,72l-1,4M198,66l-2,2M53,147l-1,3M13,166l2,5M88,124l-1,6M184,92l0,3M152,21l3,4M7,140l-1,4M67,30l-5,1M163,20l-2,2M40,107l-1,2M155,117l-5,2M139,73l-5,1M59,172l-2,2M50,4l-0,3M59,51l4,2M55,57l3,3M177,32l-5,2M123,109l-3,3M134,185l-2,2M11,188l2,5M47,91l2,5M191,102l-1,3M47,191l5,2M133,14l-2,1M114,24l-3,0M176,12l-1,2M6,115l-5,0M173,158l-0,2M107,37l-0,3M101,40l-2,3M98,16l0,4M197,113l3,1M68,141l-6,1M192,186l-5,2M4,98l-1,5M124,123l-2,0M105,193l2,0M176,192l2,0M168,138l-0,4M153,162l2,0M161,196l-3,2M68,70l5,0M53,118l-0,3M137,91l4,4M36,30l3,3M159,67l3,3M53,105l4,4M37,47l2,3M147,135l-3,3M16,153l2,2M84,199l1,3M184,199l1,2M160,157l3,5M77,58l-1,5M96,164l4,0M77,13l-2,1M42,176l-6,1M69,187l4,2M191,39l4,2M179,146l-4,1M75,24l4,4M14,37l1,2M62,37l4,2M109,114l-3,3M192,16l2,1M63,153l-4,1M32,66l-1,3M160,195l1,4M171,93l5,3M198,5l-3,2M10,33l4,3M43,4l4,3M101,131l0,3M3,61l3,0M125,74l0,4M64,72l-4,2M84,109l0,3M185,47l-5,1M178,33l-0,6M58,34l-2,2M118,32l-3,1M20,138l2,4M101,185l-0,4M0,100l3,3M128,93l4,1M97,129l-3,0M90,17l-2,2M168,160l4,4M102,86l-1,6M99,97l3,4M102,69l2,2M169,161l-6,0M139,160l-3,4M162,35l-3,2M49,185l4,0M69,159l-2,5M189,129l5,1M22,197l-3,1M38,139l-4,4M126,25l-1,2M176,154l-4,3M115,190l-2,4M78,71l3,0M161,46l-2,5M140,104l2,3M38,130l-3,5M67,186l-3,1M193,124l-5,1M67,56l-0,4M7,173l-0,4M151,50l4,3M49,66l2,0M72,106l-4,1M84,82l3,3M194,24l1,5M154,112l-2,5M183,50l-1,6M107,38l-2,1M30,111l3,4M147,64l-3,3M143,92l1,2M96,192l-2,1M14,54l-2,3M26,86l-1,5M82,131l-2,4M9,143l2,1M96,3l3,1M95,21l-5,1M98,118l3,5M24,61l4,3M103,82l2,5M52,159l-2,3M74,88l0,3M126,83l3,4M92,95l-4,1M76,180l-5,0M81,135l-2,2M146,191l-2,4M88,131l4,3M109,197l2,4M3,84l-2,2M124,44l2,6M40,183l4,1M166,168l1,4M144,153l-3,3M51,142l-1,4M200,27l-3,2M147,191l3,3M107,99l4,2" stroke="#4a3c2c" stroke-width="0.8" opacity="0.4" fill="none"/><rect width="202.3" height="200.9" filter="url(#noiseB)"/><rect width="202.3" height="200.9" filter="url(#noiseB2)"/></svg>
<svg style="left:552.9px;top:562.1px" width="201.7" height="201.5" viewBox="0 0 201.7 201.5"><rect width="201.7" height="201.5" fill="#40572c"/><rect width="201.7" height="201.5" fill="url(#gfbg)"/><rect width="201.7" height="201.5" fill="url(#gfbg2)"/><ellipse cx="103.1" cy="129.9" rx="30" ry="38" fill="#1c3322" opacity="0.6" filter="url(#b3)"/><path d="M86.7,91.6 Q96.5,72.5 86.7,43.8 Q76.8,72.5 86.7,91.6Z" fill="#4f7446" opacity="0.5" filter="url(#b3)"/><path d="M83.9,131.3 Q82.3,82.3 40.5,24.9 Q50.9,95.1 83.9,131.3Z" fill="#182e1f" opacity="0.97" filter="url(#b1)"/><path d="M82.0,126.4L84.2,124.1M82.0,126.4L78.8,126.3M80.0,121.6L83.0,118.4M80.0,121.6L75.6,121.4M78.0,116.7L81.8,112.8M78.0,116.7L72.6,116.6M76.0,111.9L80.4,107.4M76.0,111.9L69.8,111.7M74.1,107.1L78.9,102.0M74.1,107.1L67.1,106.8M72.1,102.2L77.3,96.8M72.1,102.2L64.6,102.0M70.1,97.4L75.5,91.7M70.1,97.4L62.2,97.1M68.1,92.6L73.7,86.7M68.1,92.6L60.1,92.3M66.2,87.7L71.7,81.9M66.2,87.7L58.1,87.5M64.2,82.9L69.6,77.2M64.2,82.9L56.3,82.6M62.2,78.1L67.4,72.6M62.2,78.1L54.6,77.8M60.2,73.2L65.1,68.1M60.2,73.2L53.1,73.0M58.3,68.4L62.7,63.7M58.3,68.4L51.8,68.2M56.3,63.6L60.1,59.5M56.3,63.6L50.7,63.4M54.3,58.7L57.5,55.4M54.3,58.7L49.7,58.6M52.3,53.9L54.7,51.4M52.3,53.9L48.8,53.8M50.4,49.1L51.8,47.5M50.4,49.1L48.2,49.0M48.4,44.2L48.7,43.9M48.4,44.2L47.9,44.2M46.4,39.4L46.4,39.4M46.4,39.4L46.4,39.4M44.4,34.6L44.4,34.6M44.4,34.6L44.4,34.6M42.4,29.7L42.4,29.7M42.4,29.7L42.4,29.7" stroke="#35573f" stroke-width="0.7" opacity="0.7" fill="none"/><path d="M74.4,130.4 Q64.7,112.9 38.3,101.4 Q55.1,124.8 74.4,130.4Z" fill="#1e3627" opacity="0.9" filter="url(#b1)"/><path d="M82.0,145.7 Q52.2,126.4 0.5,126.6 Q46.7,149.8 82.0,145.7Z" fill="#2b5542" opacity="0.95" filter="url(#b1)"/><path d="M78.9,145.0L78.5,142.9M78.9,145.0L77.6,146.7M75.8,144.3L75.2,141.5M75.8,144.3L74.0,146.5M72.6,143.5L72.0,140.1M72.6,143.5L70.5,146.3M69.5,142.8L68.7,138.8M69.5,142.8L67.0,146.0M66.4,142.1L65.5,137.6M66.4,142.1L63.6,145.7M63.2,141.3L62.3,136.5M63.2,141.3L60.2,145.3M60.1,140.6L59.1,135.4M60.1,140.6L56.9,144.8M57.0,139.9L55.9,134.5M57.0,139.9L53.6,144.2M53.8,139.1L52.8,133.6M53.8,139.1L50.4,143.6M50.7,138.4L49.6,132.8M50.7,138.4L47.2,142.9M47.6,137.6L46.5,132.1M47.6,137.6L44.1,142.1M44.4,136.9L43.4,131.5M44.4,136.9L41.0,141.3M41.3,136.2L40.3,130.9M41.3,136.2L38.0,140.4M38.2,135.4L37.2,130.5M38.2,135.4L35.1,139.5M35.0,134.7L34.1,130.1M35.0,134.7L32.2,138.4M31.9,134.0L31.1,129.8M31.9,134.0L29.3,137.3M28.8,133.2L28.0,129.6M28.8,133.2L26.5,136.2M25.6,132.5L25.0,129.5M25.6,132.5L23.7,134.9M22.5,131.8L22.0,129.4M22.5,131.8L21.0,133.7M19.4,131.0L19.0,129.5M19.4,131.0L18.4,132.3M16.2,130.3L16.1,129.6M16.2,130.3L15.8,130.8M13.1,129.6L13.1,129.6M13.1,129.6L13.1,129.6M9.9,128.8L9.9,128.8M9.9,128.8L9.9,128.8M6.8,128.1L6.8,128.1M6.8,128.1L6.8,128.1M3.7,127.3L3.7,127.3M3.7,127.3L3.7,127.3" stroke="#4a7a62" stroke-width="0.7" opacity="0.4" fill="none"/><path d="M77.1,144.9 Q51.6,135.5 11.5,129.3 Q50.1,141.9 77.1,144.9Z" fill="#1f3e30" opacity="0.8" filter="url(#b1)"/><path d="M89.4,160.0 Q62.9,164.8 48.7,198.8 Q83.3,186.2 89.4,160.0Z" fill="#1c3524" opacity="0.95" filter="url(#b1)"/><path d="M100.4,120.3 Q123.1,90.0 120.0,35.8 Q93.3,83.0 100.4,120.3Z" fill="#4f7f50" opacity="0.92" filter="url(#b2)"/><path d="M104.5,116.2 Q113.7,90.8 115.4,50.6 Q104.0,89.2 104.5,116.2Z" fill="#325a3c" opacity="0.7" filter="url(#b2)"/><path d="M122.2,125.8 Q161.6,108.3 200.2,58.2 Q145.2,89.3 122.2,125.8Z" fill="#567f44" opacity="0.9" filter="url(#b2)"/><path d="M111.3,120.3 Q156.9,76.1 183.8,4.1 Q130.9,59.9 111.3,120.3Z" fill="#7eae6c" opacity="0.98" filter="url(#b1)"/><path d="M113.7,116.4L116.2,116.8M113.7,116.4L112.3,114.3M116.1,112.6L119.5,113.0M116.1,112.6L114.2,109.8M118.5,108.7L122.6,109.2M118.5,108.7L116.3,105.3M121.0,104.8L125.7,105.5M121.0,104.8L118.3,100.9M123.4,100.9L128.7,101.7M123.4,100.9L120.4,96.5M125.8,97.1L131.6,97.9M125.8,97.1L122.5,92.2M128.2,93.2L134.4,94.0M128.2,93.2L124.7,88.0M130.6,89.3L137.2,90.2M130.6,89.3L126.9,83.8M133.0,85.5L139.9,86.4M133.0,85.5L129.2,79.7M135.4,81.6L142.5,82.5M135.4,81.6L131.5,75.7M137.9,77.7L145.0,78.7M137.9,77.7L133.9,71.7M140.3,73.8L147.4,74.8M140.3,73.8L136.3,67.9M142.7,70.0L149.8,70.9M142.7,70.0L138.7,64.0M145.1,66.1L152.0,67.0M145.1,66.1L141.2,60.3M147.5,62.2L154.2,63.1M147.5,62.2L143.8,56.6M149.9,58.3L156.3,59.2M149.9,58.3L146.4,53.0M152.4,54.5L158.4,55.3M152.4,54.5L149.0,49.4M154.8,50.6L160.3,51.3M154.8,50.6L151.7,45.9M157.2,46.7L162.2,47.4M157.2,46.7L154.4,42.5M159.6,42.8L164.0,43.4M159.6,42.8L157.1,39.2M162.0,39.0L165.7,39.5M162.0,39.0L159.9,35.9M164.4,35.1L167.4,35.5M164.4,35.1L162.8,32.6M166.8,31.2L168.9,31.5M166.8,31.2L165.7,29.5M169.3,27.3L170.3,27.5M169.3,27.3L168.7,26.4M171.7,23.5L171.7,23.5M171.7,23.5L171.7,23.5M174.1,19.6L174.1,19.6M174.1,19.6L174.1,19.6M176.5,15.7L176.5,15.7M176.5,15.7L176.5,15.7M178.9,11.8L178.9,11.8M178.9,11.8L178.9,11.8M181.3,8.0L181.3,8.0M181.3,8.0L181.3,8.0" stroke="#a6cc92" stroke-width="0.6" opacity="0.6" fill="none"/><path d="M111.3,120.3 Q141.7,74.7 183.8,4.1 Q138.9,73.0 111.3,120.3Z" fill="#5f8a52" opacity="0.7" filter="url(#b1)"/><path d="M112.7,149.0 Q136.3,176.6 187.6,184.6 Q149.0,149.9 112.7,149.0Z" fill="#47703e" opacity="0.9" filter="url(#b2)"/><path d="M123.6,145.7 Q142.2,147.5 163.0,131.0 Q136.5,132.2 123.6,145.7Z" fill="#1c3322" opacity="0.9" filter="url(#b1)"/><path d="M123.6,160.0 Q130.9,171.3 149.6,172.3 Q137.0,158.5 123.6,160.0Z" fill="#1c3322" opacity="0.85" filter="url(#b1)"/><path d="M91.3,143.6 Q81.3,160.9 88.1,188.4 Q98.7,162.1 91.3,143.6Z" fill="#558552" opacity="0.95" filter="url(#b1)"/><path d="M107.2,153.1 Q128.4,131.3 148.8,91.1 Q119.3,125.3 107.2,153.1Z" fill="#172b1c" opacity="0.9" filter="url(#b1)"/><path d="M104.5,150.4 Q118.6,126.1 124.1,85.0 Q106.0,122.4 104.5,150.4Z" fill="#1a2f1e" opacity="0.75" filter="url(#b1)"/><path d="M94.9,128.5 Q97.9,108.6 81.5,85.0 Q81.2,113.7 94.9,128.5Z" fill="#416e41" opacity="0.8" filter="url(#b2)"/><path d="M77.1,125.8 Q77.7,104.4 62.9,76.8 Q65.1,108.0 77.1,125.8Z" fill="#182e1f" opacity="0.85" filter="url(#b1)"/><path d="M99.0,149.0 Q95.0,131.0 77.1,110.7 Q85.5,136.4 99.0,149.0Z" fill="#172b1c" opacity="0.7" filter="url(#b1)"/><rect width="201.7" height="201.5" filter="url(#noiseC)"/></svg>
<svg style="left:0;top:0;pointer-events:none" width="1012" height="768"><polygon points="126.6,316.2 132.0,316.2 129.3,313.1" fill="#000"/><polygon points="126.6,479.2 132.0,479.2 129.3,482.4" fill="#000"/><polygon points="13.1,490.3 13.1,495.7 10.0,493.0" fill="#000"/><polygon points="115.5,490.3 115.5,495.7 118.6,493.0" fill="#000"/><line x1="134.6" y1="498.6" x2="135.2" y2="498.0" stroke="#808080" stroke-width="1"/><line x1="131.4" y1="498.6" x2="135.2" y2="494.8" stroke="#808080" stroke-width="1"/><line x1="128.2" y1="498.6" x2="135.2" y2="491.6" stroke="#808080" stroke-width="1"/><polyline points="508.4,82.4 510.4,84.6 513.8,80.2" fill="none" stroke="#000" stroke-width="1.6"/><polyline points="557.0,82.4 559.0,84.6 562.4,80.2" fill="none" stroke="#000" stroke-width="1.6"/><polyline points="608.6,82.4 610.6,84.6 614.0,80.2" fill="none" stroke="#000" stroke-width="1.6"/><polyline points="660.4,82.4 662.4,84.6 665.8,80.2" fill="none" stroke="#000" stroke-width="1.6"/><polyline points="785.3,111.3 787.1,113.3 790.5,109.3" fill="none" stroke="#000" stroke-width="1.5"/><polyline points="800.3,124.0 802.1,126.0 805.5,122.0" fill="none" stroke="#000" stroke-width="1.5"/><polyline points="815.2,136.7 817.0,138.7 820.4,134.7" fill="none" stroke="#000" stroke-width="1.5"/><polyline points="815.2,149.3 817.0,151.3 820.4,147.3" fill="none" stroke="#000" stroke-width="1.5"/><polyline points="815.2,162.0 817.0,164.0 820.4,160.0" fill="none" stroke="#000" stroke-width="1.5"/><polyline points="815.2,174.7 817.0,176.7 820.4,172.7" fill="none" stroke="#000" stroke-width="1.5"/><polyline points="800.3,187.4 802.1,189.4 805.5,185.4" fill="none" stroke="#000" stroke-width="1.5"/><polyline points="800.3,200.1 802.1,202.1 805.5,198.1" fill="none" stroke="#000" stroke-width="1.5"/><polyline points="800.3,212.7 802.1,214.7 805.5,210.7" fill="none" stroke="#000" stroke-width="1.5"/><polyline points="800.3,225.4 802.1,227.4 805.5,223.4" fill="none" stroke="#000" stroke-width="1.5"/><polyline points="800.3,238.1 802.1,240.1 805.5,236.1" fill="none" stroke="#000" stroke-width="1.5"/><polyline points="800.3,250.8 802.1,252.8 805.5,248.8" fill="none" stroke="#000" stroke-width="1.5"/><polyline points="800.3,263.5 802.1,265.5 805.5,261.5" fill="none" stroke="#000" stroke-width="1.5"/><polyline points="800.3,276.1 802.1,278.1 805.5,274.1" fill="none" stroke="#000" stroke-width="1.5"/><polyline points="800.3,288.8 802.1,290.8 805.5,286.8" fill="none" stroke="#000" stroke-width="1.5"/><polyline points="800.3,301.5 802.1,303.5 805.5,299.5" fill="none" stroke="#000" stroke-width="1.5"/><polyline points="800.3,314.2 802.1,316.2 805.5,312.2" fill="none" stroke="#000" stroke-width="1.5"/><polyline points="800.3,326.9 802.1,328.9 805.5,324.9" fill="none" stroke="#000" stroke-width="1.5"/><polyline points="800.3,339.5 802.1,341.5 805.5,337.5" fill="none" stroke="#000" stroke-width="1.5"/><polyline points="800.3,352.2 802.1,354.2 805.5,350.2" fill="none" stroke="#000" stroke-width="1.5"/><polyline points="800.3,364.9 802.1,366.9 805.5,362.9" fill="none" stroke="#000" stroke-width="1.5"/><polyline points="800.3,377.6 802.1,379.6 805.5,375.6" fill="none" stroke="#000" stroke-width="1.5"/><polyline points="800.3,390.3 802.1,392.3 805.5,388.3" fill="none" stroke="#000" stroke-width="1.5"/><polyline points="800.3,402.9 802.1,404.9 805.5,400.9" fill="none" stroke="#000" stroke-width="1.5"/><polygon points="157.2,570.6 162.6,570.6 159.9,567.5" fill="#000"/><polygon points="157.2,753.8 162.6,753.8 159.9,756.9" fill="#000"/><polygon points="537.5,570.6 542.9,570.6 540.2,567.5" fill="#000"/><polygon points="537.5,742.6 542.9,742.6 540.2,745.8" fill="#000"/><polygon points="393.2,753.0 393.2,758.4 390.1,755.7" fill="#000"/><polygon points="526.9,753.0 526.9,758.4 530.0,755.7" fill="#000"/><polygon points="996.1,570.8 1001.5,570.8 998.8,567.7" fill="#000"/><polygon points="996.1,753.9 1001.5,753.9 998.8,757.0" fill="#000"/></svg>
</div></body></html>
